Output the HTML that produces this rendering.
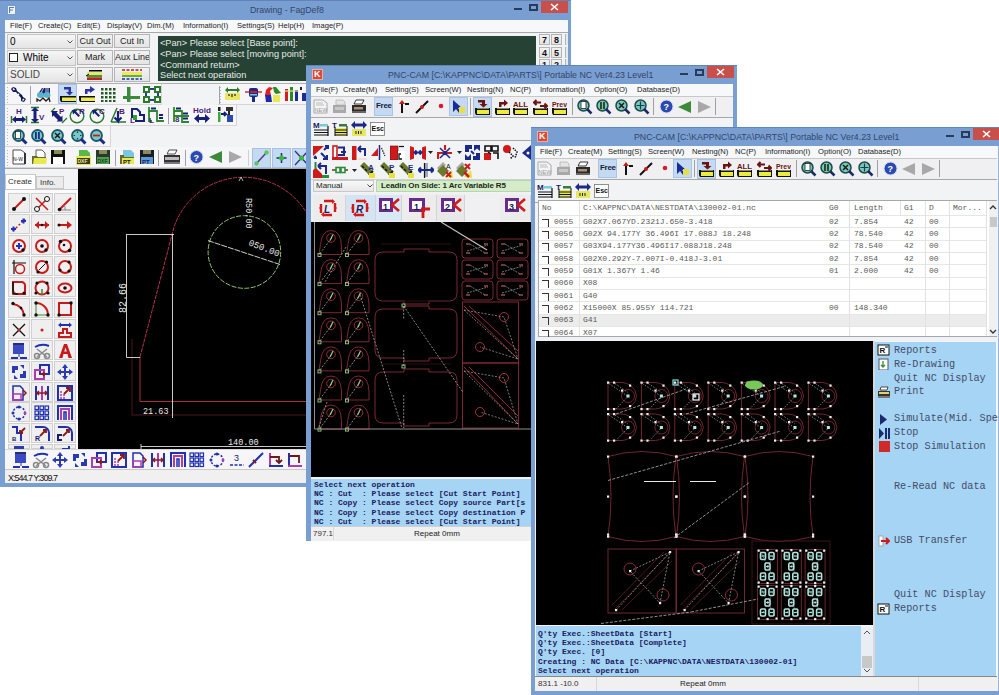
<!DOCTYPE html><html><head><meta charset="utf-8"><style>
*{margin:0;padding:0;box-sizing:border-box}
html,body{width:999px;height:695px;overflow:hidden;background:#fff;font-family:"Liberation Sans",sans-serif;font-size:9px;color:#000}
.a{position:absolute}
.t{white-space:pre;line-height:1}
.frame{background:#789ed2}
.title{color:#2a3a5a;font-size:11px;white-space:nowrap}
.menu{background:#f5f6f8}
.mi{position:absolute;font-size:7.6px;color:#222;white-space:pre;line-height:1}
.tb{background:#f2f3f5}
.blk{background:#000}
.mono{font-family:"Liberation Mono",monospace}
.msg{background:#a6d4f4;color:#1a2060;font-weight:bold;font-family:"Liberation Mono",monospace;font-size:8px;line-height:9.2px;white-space:pre;overflow:hidden}
.status{background:#f0f0f0;font-size:8px}
.cls{background:#c9504a}
.btn{background:linear-gradient(#f2f2f2,#e4e4e4);border:1px solid #b4b4b4;font-size:9px;text-align:center;color:#222;line-height:13px;white-space:nowrap;overflow:hidden}
.combo{background:linear-gradient(#f4f4f4,#e2e2e2);border:1px solid #c0c0c0;font-size:10px;color:#222;line-height:13px;white-space:nowrap}
.hl{background:#c6dcf4;border:1px solid #98b8e0}
</style></head><body>
<div class="a" style="left:0px;top:0px;width:571px;height:487px;background:#789ed2;border-top:1px solid #5f86bb"></div>
<div class="a" style="left:7px;top:5px;width:9px;height:10px;background:#eef4fc;border:1px solid #7a9aca"></div>
<svg class="a" style="left:9px;top:7px;" width="5" height="6" viewBox="0 0 5 6"><path d="M0.5 6V0.5H5M0.5 3H4" stroke="#5a7ab0" stroke-width="1.2" fill="none"/></svg>
<div class="a t" style="left:250px;top:6px;font-size:8.8px;color:#34466a">Drawing - FagDef8</div>
<div class="a" style="left:514px;top:8px;width:8px;height:2px;background:#2a3a5a"></div>
<div class="a" style="left:529px;top:4px;width:9px;height:7px;border:2px solid #2a3a5a"></div>
<div class="a" style="left:541px;top:1px;width:27px;height:12px;background:#c9504a"></div>
<svg class="a" style="left:550px;top:3px;" width="9" height="8" viewBox="0 0 9 8"><path d="M1 1L8 7M8 1L1 7" stroke="#fff" stroke-width="1.6"/></svg>
<div class="a" style="left:5px;top:20px;width:563px;height:463px;background:#f2f3f5"></div>
<div class="a" style="left:5px;top:20px;width:563px;height:12px;background:#f7f8fa"></div>
<div class="a" style="left:5px;top:32px;width:563px;height:1px;background:#a8a8a8"></div>
<div class="mi" style="left:10px;top:22px">File(F)</div>
<div class="mi" style="left:38px;top:22px">Create(C)</div>
<div class="mi" style="left:77px;top:22px">Edit(E)</div>
<div class="mi" style="left:107px;top:22px">Display(V)</div>
<div class="mi" style="left:147px;top:22px">Dim.(M)</div>
<div class="mi" style="left:183px;top:22px">Information(I)</div>
<div class="mi" style="left:237px;top:22px">Settings(S)</div>
<div class="mi" style="left:278px;top:22px">Help(H)</div>
<div class="mi" style="left:312px;top:22px">Image(P)</div>
<div class="a" style="left:7px;top:34px;width:69px;height:15px;background:linear-gradient(#f6f6f6,#e4e4e4);border:1px solid #c4c4c4"></div>
<div class="a t" style="left:10px;top:37px;font-size:10px">0</div>
<div class="a" style="left:7px;top:50px;width:69px;height:16px;background:linear-gradient(#f6f6f6,#e4e4e4);border:1px solid #c4c4c4"></div>
<div class="a" style="left:9px;top:53px;width:9px;height:9px;background:#fff;border:1px solid #222"></div>
<div class="a t" style="left:23px;top:53px;font-size:10px">White</div>
<div class="a" style="left:7px;top:67px;width:69px;height:16px;background:linear-gradient(#f6f6f6,#e4e4e4);border:1px solid #c4c4c4"></div>
<div class="a t" style="left:10px;top:70px;font-size:10px;color:#444">SOLID</div>
<svg class="a" style="left:67px;top:40px;" width="6" height="4" viewBox="0 0 6 4"><path d="M0.5 0.5L3 3L5.5 0.5" stroke="#555" fill="none"/></svg>
<svg class="a" style="left:67px;top:56px;" width="6" height="4" viewBox="0 0 6 4"><path d="M0.5 0.5L3 3L5.5 0.5" stroke="#555" fill="none"/></svg>
<svg class="a" style="left:67px;top:73px;" width="6" height="4" viewBox="0 0 6 4"><path d="M0.5 0.5L3 3L5.5 0.5" stroke="#555" fill="none"/></svg>
<div class="a btn" style="left:77px;top:34px;width:36px;height:14px">Cut Out</div>
<div class="a btn" style="left:114px;top:34px;width:36px;height:14px">Cut In</div>
<div class="a btn" style="left:77px;top:50px;width:36px;height:15px">Mark</div>
<div class="a btn" style="left:114px;top:50px;width:36px;height:15px">Aux Line</div>
<div class="a btn" style="left:77px;top:67px;width:36px;height:15px"></div>
<div class="a btn" style="left:114px;top:67px;width:36px;height:15px"></div>
<svg class="a" style="left:85px;top:68px;" width="22" height="13" viewBox="0 0 22 13"><rect x="4" y="2" width="13" height="1.5" fill="#000"/><rect x="2" y="4" width="15" height="3" fill="#e8e870"/><rect x="2" y="7" width="15" height="2.5" fill="#3a9a3a"/><rect x="2" y="9.5" width="15" height="2.5" fill="#c02020"/><path d="M1 8L4 6" stroke="#000"/></svg>
<svg class="a" style="left:120px;top:68px;" width="24" height="13" viewBox="0 0 24 13"><path d="M2 2H22" stroke="#b02020" stroke-width="1.6" stroke-dasharray="3 1.5"/><rect x="2" y="4" width="20" height="3" fill="#f0e860"/><rect x="2" y="7" width="20" height="2" fill="#60b040"/><path d="M2 11H22" stroke="#2030a0" stroke-width="1.6" stroke-dasharray="3 1.5"/></svg>
<div class="a" style="left:158px;top:36px;width:378px;height:45px;background:#264234"></div>
<div class="a" style="left:160px;top:38px;font-size:9.2px;line-height:10.8px;color:#e4ece8;white-space:pre">&lt;Pan&gt; Please select [Base point]:
&lt;Pan&gt; Please select [moving point]:
&lt;Command return&gt;
Select next operation</div>
<div class="a btn" style="left:539px;top:34.0px;width:11px;height:11px;font-size:9px;line-height:10px;font-weight:bold;color:#111">7</div>
<div class="a btn" style="left:551px;top:34.0px;width:11px;height:11px;font-size:9px;line-height:10px;font-weight:bold;color:#111">8</div>
<div class="a" style="left:565px;top:34px;width:3px;height:11px;background:#e8e8e8;border-left:1px solid #b4b4b4"></div>
<div class="a btn" style="left:539px;top:46.7px;width:11px;height:11px;font-size:9px;line-height:10px;font-weight:bold;color:#111">4</div>
<div class="a btn" style="left:551px;top:46.7px;width:11px;height:11px;font-size:9px;line-height:10px;font-weight:bold;color:#111">5</div>
<div class="a" style="left:565px;top:47px;width:3px;height:11px;background:#e8e8e8;border-left:1px solid #b4b4b4"></div>
<div class="a btn" style="left:539px;top:59.4px;width:11px;height:11px;font-size:9px;line-height:10px;font-weight:bold;color:#111">1</div>
<div class="a btn" style="left:551px;top:59.4px;width:11px;height:11px;font-size:9px;line-height:10px;font-weight:bold;color:#111">2</div>
<div class="a" style="left:565px;top:59px;width:3px;height:11px;background:#e8e8e8;border-left:1px solid #b4b4b4"></div>
<div class="a" style="left:5px;top:83px;width:563px;height:86px;background:#f2f3f5"></div>
<div class="a" style="left:5px;top:83px;width:563px;height:1px;background:#b0b0b0"></div>
<div class="a" style="left:5px;top:84px;width:157px;height:21px;background:#f6f5f8;border-bottom:1px solid #d6d6d6;border-right:1px solid #d6d6d6"></div>
<div class="a" style="left:7px;top:87px;width:1px;height:1px;background:#b8b8b8"></div>
<div class="a" style="left:7px;top:90px;width:1px;height:1px;background:#b8b8b8"></div>
<div class="a" style="left:7px;top:93px;width:1px;height:1px;background:#b8b8b8"></div>
<div class="a" style="left:7px;top:96px;width:1px;height:1px;background:#b8b8b8"></div>
<div class="a" style="left:7px;top:99px;width:1px;height:1px;background:#b8b8b8"></div>
<div class="a" style="left:7px;top:102px;width:1px;height:1px;background:#b8b8b8"></div>
<div class="a" style="left:218px;top:84px;width:90px;height:21px;background:#f6f5f8;border-bottom:1px solid #d6d6d6;border-right:1px solid #d6d6d6"></div>
<div class="a" style="left:220px;top:87px;width:1px;height:1px;background:#b8b8b8"></div>
<div class="a" style="left:220px;top:90px;width:1px;height:1px;background:#b8b8b8"></div>
<div class="a" style="left:220px;top:93px;width:1px;height:1px;background:#b8b8b8"></div>
<div class="a" style="left:220px;top:96px;width:1px;height:1px;background:#b8b8b8"></div>
<div class="a" style="left:220px;top:99px;width:1px;height:1px;background:#b8b8b8"></div>
<div class="a" style="left:220px;top:102px;width:1px;height:1px;background:#b8b8b8"></div>
<div class="a" style="left:5px;top:105px;width:232px;height:21px;background:#f6f5f8;border-bottom:1px solid #d6d6d6;border-right:1px solid #d6d6d6"></div>
<div class="a" style="left:7px;top:108px;width:1px;height:1px;background:#b8b8b8"></div>
<div class="a" style="left:7px;top:111px;width:1px;height:1px;background:#b8b8b8"></div>
<div class="a" style="left:7px;top:114px;width:1px;height:1px;background:#b8b8b8"></div>
<div class="a" style="left:7px;top:117px;width:1px;height:1px;background:#b8b8b8"></div>
<div class="a" style="left:7px;top:120px;width:1px;height:1px;background:#b8b8b8"></div>
<div class="a" style="left:7px;top:123px;width:1px;height:1px;background:#b8b8b8"></div>
<div class="a" style="left:5px;top:126px;width:106px;height:21px;background:#f6f5f8;border-bottom:1px solid #d6d6d6;border-right:1px solid #d6d6d6"></div>
<div class="a" style="left:7px;top:129px;width:1px;height:1px;background:#b8b8b8"></div>
<div class="a" style="left:7px;top:132px;width:1px;height:1px;background:#b8b8b8"></div>
<div class="a" style="left:7px;top:135px;width:1px;height:1px;background:#b8b8b8"></div>
<div class="a" style="left:7px;top:138px;width:1px;height:1px;background:#b8b8b8"></div>
<div class="a" style="left:7px;top:141px;width:1px;height:1px;background:#b8b8b8"></div>
<div class="a" style="left:7px;top:144px;width:1px;height:1px;background:#b8b8b8"></div>
<div class="a" style="left:5px;top:147px;width:302px;height:21px;background:#f6f5f8;border-bottom:1px solid #d6d6d6;border-right:1px solid #d6d6d6"></div>
<div class="a" style="left:7px;top:150px;width:1px;height:1px;background:#b8b8b8"></div>
<div class="a" style="left:7px;top:153px;width:1px;height:1px;background:#b8b8b8"></div>
<div class="a" style="left:7px;top:156px;width:1px;height:1px;background:#b8b8b8"></div>
<div class="a" style="left:7px;top:159px;width:1px;height:1px;background:#b8b8b8"></div>
<div class="a" style="left:7px;top:162px;width:1px;height:1px;background:#b8b8b8"></div>
<div class="a" style="left:7px;top:165px;width:1px;height:1px;background:#b8b8b8"></div>
<div class="a" style="left:5px;top:168px;width:563px;height:1px;background:#a8a8a8"></div>
<svg class="a" style="left:10px;top:86px;" width="17" height="17" viewBox="0 0 17 17"><path d="M3 1L1 3L3 6L6 6L11 12L11 15L14 16L16 13L13 11L12 9L7 5L6 2Z" fill="#16165a"/><path d="M14 13L12.5 14.5" stroke="#f4f4f8" stroke-width="1.5"/><path d="M3 2.5L4.5 4" stroke="#f4f4f8" stroke-width="1.5"/><circle cx="8.5" cy="8.5" r="0.9" fill="#fff"/></svg>
<div class="a" style="left:30px;top:86px;width:1px;height:18px;background:#a0a0a8"></div>
<svg class="a" style="left:36px;top:86px;" width="15" height="17" viewBox="0 0 15 17"><path d="M2 8L6 2H14V9H2Z" fill="#16206a"/><path d="M8 1L5 7M10 2V8M12 2V8" stroke="#f4f4f8" stroke-width=".8"/><ellipse cx="4.5" cy="9" rx="3.5" ry="3" fill="#58b4cc"/><ellipse cx="11" cy="9" rx="3.5" ry="3" fill="#58b4cc"/><path d="M1 16V13L4 15L7 12L10 15L13 12L14 16" stroke="#301818" fill="none" stroke-width="1.3"/></svg>
<div class="a" style="left:58px;top:84px;width:19px;height:20px;background:#c4daf2;border:1px solid #a4c0e4"></div>
<svg class="a" style="left:60px;top:86px;" width="17" height="17" viewBox="0 0 17 17"><path d="M4 1H11V6H13L9.5 9.5L6 6H8.5V3.5H4Z" fill="#2a36a8"/><path d="M0 10H16V16H1L0 14Z" fill="#101010"/><rect x="2" y="11.5" width="14" height="3.5" fill="#ecec4a"/></svg>
<svg class="a" style="left:79px;top:86px;" width="17" height="17" viewBox="0 0 17 17"><path d="M6 8V3H11V0L16 3.5L11 7V5.5H8.5V8Z" fill="#2a36a8"/><path d="M0 10H16V16H1L0 14Z" fill="#101010"/><rect x="2" y="11.5" width="14" height="3.5" fill="#ecec4a"/></svg>
<svg class="a" style="left:100px;top:87px;" width="16" height="15" viewBox="0 0 16 15"><rect x="1" y="1" width="2.5" height="2.5" fill="#245a24"/><rect x="5" y="1" width="2.5" height="2.5" fill="#245a24"/><rect x="9" y="1" width="2.5" height="2.5" fill="#245a24"/><rect x="13" y="1" width="2.5" height="2.5" fill="#245a24"/><rect x="1" y="5" width="2.5" height="2.5" fill="#245a24"/><rect x="5" y="5" width="2.5" height="2.5" fill="#245a24"/><rect x="9" y="5" width="2.5" height="2.5" fill="#245a24"/><rect x="13" y="5" width="2.5" height="2.5" fill="#245a24"/><rect x="1" y="9" width="2.5" height="2.5" fill="#245a24"/><rect x="5" y="9" width="2.5" height="2.5" fill="#245a24"/><rect x="9" y="9" width="2.5" height="2.5" fill="#245a24"/><rect x="13" y="9" width="2.5" height="2.5" fill="#245a24"/><rect x="1" y="13" width="2.5" height="2.5" fill="#245a24"/><rect x="5" y="13" width="2.5" height="2.5" fill="#245a24"/><rect x="9" y="13" width="2.5" height="2.5" fill="#245a24"/><rect x="13" y="13" width="2.5" height="2.5" fill="#245a24"/></svg>
<svg class="a" style="left:123px;top:87px;" width="17" height="15" viewBox="0 0 17 15"><rect x="4" y="0" width="3.5" height="15" fill="#3a8a3a"/><rect x="0" y="9" width="17" height="3" fill="#3a8a3a"/></svg>
<svg class="a" style="left:143px;top:86px;" width="18" height="17" viewBox="0 0 18 17"><g fill="#2a3aa8"><rect x="6" y="2" width="6" height="2"/><rect x="6" y="13" width="6" height="2"/><rect x="2" y="6" width="2" height="5"/><rect x="14" y="6" width="2" height="5"/></g><g fill="none" stroke="#2a7a2a" stroke-width="2"><rect x="1" y="1" width="5" height="5"/><rect x="12" y="1" width="5" height="5"/><rect x="1" y="11" width="5" height="5"/><rect x="12" y="11" width="5" height="5"/></g></svg>
<div class="a" style="left:219px;top:86px;width:1px;height:18px;background:#a0a0a8"></div>
<svg class="a" style="left:224px;top:87px;" width="17" height="14" viewBox="0 0 17 14"><path d="M1 3L4 0V2H13V0L16 3L13 6V4H4V6Z" fill="#2a7a2a"/><rect x="1" y="6" width="15" height="7" fill="#eae860"/><path d="M5 7V9M8 7V10M11 7V9" stroke="#202020" stroke-width="1.2"/></svg>
<svg class="a" style="left:245px;top:87px;" width="17" height="15" viewBox="0 0 17 15"><path d="M0 5H17" stroke="#d02020" stroke-width="1.4"/><rect x="4" y="1" width="9" height="9" rx="2" fill="#1a2a8a"/><rect x="5" y="4" width="7" height="2" fill="#d02020"/><rect x="5" y="7" width="7" height="1.5" fill="#6ad0e0"/><rect x="7" y="10" width="3" height="5" fill="#1a2a8a"/></svg>
<svg class="a" style="left:265px;top:87px;" width="16" height="15" viewBox="0 0 16 15"><path d="M1 3L4 0L8 1L5 4L6 8H0Z" fill="#e02020"/><path d="M8 0H11L16 6L11 7L9 5Z" fill="#2a8a2a"/><path d="M0 8H6L7 15H1Z" fill="#1a2ab0"/><rect x="8" y="8" width="7" height="7" fill="#e8e850"/></svg>
<svg class="a" style="left:285px;top:86px;" width="22" height="16" viewBox="0 0 22 16"><rect x="0" y="3" width="3" height="12" fill="#d02020"/><rect x="5" y="1" width="3" height="14" fill="#2a8a2a"/><rect x="10" y="4" width="3" height="11" fill="#1a2aa0"/><rect x="15" y="1" width="2" height="3" fill="#222"/><rect x="17" y="7" width="4" height="8" fill="#1a2aa0"/><rect x="0" y="4" width="13" height="2" fill="#e8e880" opacity=".6"/></svg>
<svg class="a" style="left:10px;top:107px;" width="18" height="17" viewBox="0 0 18 17"><text font-family="Liberation Sans" font-weight="bold" font-size="8" fill="#4a1a7a" x="6" y="7">H</text><path d="M1.5 9V16M16.5 9V16" stroke="#2a7a2a" stroke-width="1.5"/><path d="M2 12.5L6 9V11H12V9L16 12.5L12 16V14H6V16Z" fill="#16207a"/></svg>
<svg class="a" style="left:30px;top:106px;" width="18" height="18" viewBox="0 0 18 18"><path d="M1 1.5H9M1 16.5H9" stroke="#2a7a2a" stroke-width="1.5"/><path d="M5 1L9 5H6.5V13H9L5 17L1 13H3.5V5H1Z" fill="#16207a"/><text font-family="Liberation Sans" font-weight="bold" font-size="8" fill="#4a1a7a" x="9" y="14" font-size="9">V</text></svg>
<svg class="a" style="left:50px;top:106px;" width="18" height="18" viewBox="0 0 18 18"><path d="M1 6L5 2M12 17L17 12" stroke="#2a7a2a" stroke-width="1.3"/><path d="M2 5H8L6.5 6.5L11 11L12.5 9.5V15.5H6.5L8 14L3.5 9.5L2 11Z" fill="#16207a"/><text font-family="Liberation Sans" font-weight="bold" font-size="8" fill="#4a1a7a" x="9" y="8" font-size="9">P</text></svg>
<svg class="a" style="left:69px;top:106px;" width="18" height="18" viewBox="0 0 18 18"><circle cx="8" cy="10" r="6.8" fill="none" stroke="#2a7a2a" stroke-width="1.4"/><path d="M3 4H8.5L7 5.5L11 9.5L9.5 11L5.5 7L4 8.5Z" fill="#16207a"/><text font-family="Liberation Sans" font-weight="bold" font-size="8" fill="#4a1a7a" x="10" y="8" font-size="9">R</text></svg>
<svg class="a" style="left:89px;top:106px;" width="18" height="18" viewBox="0 0 18 18"><circle cx="8" cy="10" r="6.8" fill="none" stroke="#2a7a2a" stroke-width="1.4"/><path d="M3 4H8.5L7 5.5L11 9.5L9.5 11L5.5 7L4 8.5Z" fill="#16207a"/><text font-family="Liberation Sans" font-weight="bold" font-size="8" fill="#4a1a7a" x="10" y="8" font-size="9">C</text></svg>
<svg class="a" style="left:110px;top:106px;" width="17" height="18" viewBox="0 0 17 18"><path d="M1 16L7 2M1 16H16" stroke="#2a7a2a" stroke-width="1.5"/><path d="M8 5V15L4.5 11.5M8 15L11.5 11.5" stroke="#16207a" stroke-width="2.2" fill="none"/><text font-family="Liberation Sans" font-weight="bold" font-size="8" fill="#4a1a7a" x="9" y="8" font-size="9">B</text></svg>
<svg class="a" style="left:129px;top:106px;" width="17" height="18" viewBox="0 0 17 18"><path d="M3 3H8L11 6V9H15V15H7V11H3Z" fill="none" stroke="#16207a" stroke-width="2"/><rect x="4" y="9" width="4" height="5" fill="#3a9a3a"/><text font-family="Liberation Sans" font-weight="bold" font-size="8" fill="#4a1a7a" x="1" y="17">L</text></svg>
<svg class="a" style="left:148px;top:106px;" width="17" height="18" viewBox="0 0 17 18"><path d="M1 1V15H4M1 5H9V15H16" stroke="#2a8a2a" stroke-width="1.8" fill="none"/><path d="M3 2.5H8M11 9H15M11 12H15" stroke="#16207a" stroke-width="1.8"/><text font-family="Liberation Sans" font-weight="bold" font-size="8" fill="#4a1a7a" x="1" y="17">L</text></svg>
<div class="a" style="left:168px;top:108px;width:1px;height:16px;background:#a0a0a8"></div>
<svg class="a" style="left:173px;top:106px;" width="17" height="18" viewBox="0 0 17 18"><path d="M1 1V16M1 5H9V16H16M1 10H16" stroke="#2a8a2a" stroke-width="1.8" fill="none"/><path d="M3 2.5H8M10 7.5H15M10 12.5H15" stroke="#16207a" stroke-width="1.8"/><text font-family="Liberation Sans" font-weight="bold" font-size="8" fill="#4a1a7a" x="2" y="16">8</text></svg>
<svg class="a" style="left:193px;top:106px;" width="18" height="18" viewBox="0 0 18 18"><text font-family="Liberation Sans" font-weight="bold" font-size="8" fill="#4a1a7a" x="0" y="7" font-size="7" fill="#3a1a7a">Hold</text><path d="M1 12.5L6 8V11H12V8L17 12.5L12 17V14H6V17Z" fill="#16207a"/></svg>
<svg class="a" style="left:217px;top:106px;" width="17" height="18" viewBox="0 0 17 18"><rect x="1" y="6" width="2.5" height="10" fill="#3aaa3a"/><rect x="1" y="1" width="2.5" height="4" fill="#222"/><path d="M4 8H9L7 6M9 8L7 10" stroke="#16207a" stroke-width="1.8" fill="none"/><rect x="9" y="1" width="7" height="4" fill="#333"/><rect x="10" y="9" width="6" height="7" fill="#2a4ab0"/><rect x="11" y="5" width="2" height="4" fill="#222"/></svg>
<svg class="a" style="left:12px;top:129px;" width="16" height="16" viewBox="0 0 16 16"><circle cx="6.5" cy="6.5" r="5.5" fill="#7ac8c8" stroke="#1a5a6a" stroke-width="1.8"/><rect x="3.5" y="2.5" width="5" height="7" fill="#fff" stroke="#222" stroke-width=".8"/><path d="M10 10L14.5 14.5" stroke="#1a2a8a" stroke-width="3"/></svg>
<svg class="a" style="left:31px;top:129px;" width="16" height="16" viewBox="0 0 16 16"><circle cx="6.5" cy="6.5" r="5.5" fill="#7ac8c8" stroke="#1a5a6a" stroke-width="1.8"/><rect x="4" y="3" width="1.8" height="7" fill="#1a2a8a"/><rect x="7" y="3" width="1.8" height="7" fill="#1a2a8a"/><path d="M10 10L14.5 14.5" stroke="#1a2a8a" stroke-width="3"/></svg>
<svg class="a" style="left:51px;top:129px;" width="16" height="16" viewBox="0 0 16 16"><circle cx="6.5" cy="6.5" r="5.5" fill="#7ac8c8" stroke="#1a5a6a" stroke-width="1.8"/><path d="M4 4L9 9M9 4L4 9" stroke="#1a1a1a" stroke-width="1.5"/><path d="M10 10L14.5 14.5" stroke="#1a2a8a" stroke-width="3"/></svg>
<svg class="a" style="left:71px;top:129px;" width="16" height="16" viewBox="0 0 16 16"><circle cx="6.5" cy="6.5" r="5.5" fill="#7ac8c8" stroke="#1a5a6a" stroke-width="1.8"/><path d="M6.5 2.5V4M6.5 9V10.5M2.5 6.5H4M9 6.5H10.5" stroke="#1a3a5a" stroke-width="1.2"/><path d="M10 10L14.5 14.5" stroke="#1a2a8a" stroke-width="3"/></svg>
<svg class="a" style="left:90px;top:129px;" width="16" height="16" viewBox="0 0 16 16"><circle cx="6.5" cy="6.5" r="5.5" fill="#7ac8c8" stroke="#1a5a6a" stroke-width="1.8"/><path d="M3 6.5H10" stroke="#c02020" stroke-width="1.8"/><path d="M10 10L14.5 14.5" stroke="#1a2a8a" stroke-width="3"/></svg>
<svg class="a" style="left:12px;top:149px;" width="15" height="16" viewBox="0 0 15 16"><path d="M1 1H9L13 4V15H1Z" fill="#fff" stroke="#222" stroke-width=".8"/><path d="M13 4V15" stroke="#111" stroke-width="1.5"/><text x="1" y="12" font-size="5" font-family="Liberation Sans" fill="#111">N-W</text></svg>
<svg class="a" style="left:31px;top:149px;" width="16" height="16" viewBox="0 0 16 16"><path d="M5 1H11L14 4V9H5Z" fill="#fff" stroke="#333" stroke-width=".8"/><path d="M1 7H6L7 8H15V15H1Z" fill="#6a6a2a"/><path d="M3 9H16L15 15H2Z" fill="#e8e850"/></svg>
<svg class="a" style="left:50px;top:149px;" width="16" height="16" viewBox="0 0 16 16"><rect x="1" y="1" width="14" height="14" fill="#101010"/><rect x="4" y="1" width="8" height="4" fill="#8a8a5a"/><rect x="3" y="8" width="10" height="7" fill="#fff"/></svg>
<svg class="a" style="left:75px;top:149px;" width="16" height="16" viewBox="0 0 16 16"><path d="M4 1H12L15 4V9H4Z" fill="#5ab84a"/><rect x="1" y="7" width="15" height="9" fill="#e8e850"/><rect x="2" y="9" width="13" height="6" fill="#3a3a1a"/><text x="2.5" y="14" font-size="5" font-weight="bold" font-family="Liberation Sans" fill="#e8e8a0">DXF</text></svg>
<svg class="a" style="left:95px;top:149px;" width="16" height="16" viewBox="0 0 16 16"><rect x="1" y="1" width="14" height="14" fill="#2a3a2a"/><rect x="4" y="1" width="8" height="4" fill="#8a8a5a"/><rect x="2" y="8" width="12" height="7" fill="#4aa04a"/><text x="2.5" y="14" font-size="5" font-family="Liberation Sans" fill="#111">DXF</text></svg>
<div class="a" style="left:115px;top:150px;width:1px;height:16px;background:#a0a0a8"></div>
<svg class="a" style="left:119px;top:149px;" width="16" height="16" viewBox="0 0 16 16"><path d="M4 1H12L15 4V9H4Z" fill="#7ac8e0"/><path d="M1 6H5V8H15V15H1Z" fill="#6a6a2a"/><rect x="3" y="9" width="12" height="6" fill="#e8e850"/><text x="4" y="14.5" font-size="6" font-weight="bold" font-family="Liberation Sans" fill="#111">PT</text></svg>
<svg class="a" style="left:139px;top:149px;" width="16" height="16" viewBox="0 0 16 16"><rect x="1" y="1" width="14" height="14" fill="#1a1a2a"/><rect x="4" y="1" width="8" height="4" fill="#8a8a5a"/><rect x="2" y="8" width="12" height="7" fill="#5a9ad0"/><text x="3" y="14.5" font-size="6" font-weight="bold" font-family="Liberation Sans" fill="#1a1a5a">PT</text></svg>
<div class="a" style="left:158px;top:150px;width:1px;height:16px;background:#a0a0a8"></div>
<svg class="a" style="left:163px;top:149px;" width="18" height="16" viewBox="0 0 18 16"><path d="M6 1H14L12 5H4Z" fill="#fff" stroke="#222" stroke-width=".8"/><path d="M1 6H17V13H1Z" fill="#333"/><rect x="2" y="8" width="14" height="3" fill="#bcbcbc"/><rect x="1" y="13" width="16" height="2" fill="#777"/></svg>
<div class="a" style="left:185px;top:150px;width:1px;height:16px;background:#a0a0a8"></div>
<svg class="a" style="left:189px;top:149px;" width="15" height="16" viewBox="0 0 15 16"><circle cx="7.5" cy="8" r="6.5" fill="#2a4ab0" stroke="#cfd8f0"/><text x="4.5" y="11.5" font-size="9" font-weight="bold" font-family="Liberation Sans" fill="#fff">?</text></svg>
<svg class="a" style="left:208px;top:150px;" width="15" height="14" viewBox="0 0 15 14"><path d="M1 7L14 1V13Z" fill="#3a8a3a"/></svg>
<svg class="a" style="left:228px;top:150px;" width="15" height="14" viewBox="0 0 15 14"><path d="M14 7L1 1V13Z" fill="#a8a8a8"/></svg>
<div class="a" style="left:248px;top:150px;width:1px;height:16px;background:#d0d0d0"></div>
<div class="a" style="left:252px;top:148px;width:19px;height:20px;background:#c4daf2;border:1px solid #a4c0e4"></div>
<div class="a" style="left:272px;top:148px;width:19px;height:20px;background:#c4daf2;border:1px solid #a4c0e4"></div>
<div class="a" style="left:292px;top:148px;width:19px;height:20px;background:#c4daf2;border:1px solid #a4c0e4"></div>
<svg class="a" style="left:254px;top:150px;" width="15" height="16" viewBox="0 0 15 16"><path d="M2 14L13 2" stroke="#5a3a8a" stroke-width="1.5"/><circle cx="2.5" cy="13.5" r="2.2" fill="#5ac85a"/><circle cx="12.5" cy="2.5" r="2.2" fill="#5ac85a"/></svg>
<svg class="a" style="left:274px;top:150px;" width="15" height="16" viewBox="0 0 15 16"><path d="M7.5 3V13M2.5 8H12.5" stroke="#1a2a7a" stroke-width="1.5"/><circle cx="7.5" cy="8" r="2.5" fill="#3ab83a"/></svg>
<svg class="a" style="left:294px;top:150px;" width="15" height="16" viewBox="0 0 15 16"><path d="M1 1L14 15M14 1L1 15" stroke="#3a2a8a" stroke-width="1.3"/><circle cx="7.5" cy="8" r="2.5" fill="#3ab83a"/></svg>
<div class="a" style="left:78px;top:169px;width:490px;height:280px;background:#000"></div>
<div class="a" style="left:5px;top:169px;width:73px;height:280px;background:#f2f3f5"></div>
<div class="a" style="left:5px;top:174px;width:31px;height:16px;background:#fff;border:1px solid #c8c8c8;border-bottom:none"></div>
<div class="a t" style="left:8px;top:178px;font-size:8px;color:#333">Create</div>
<div class="a" style="left:36px;top:176px;width:28px;height:13px;background:#ececec;border:1px solid #c8c8c8"></div>
<div class="a t" style="left:40px;top:179px;font-size:8px;color:#333">Info.</div>
<div class="a" style="left:5px;top:189px;width:73px;height:260px;background:#fbfbfb;border-top:1px solid #c8c8c8"></div>
<div class="a" style="left:8px;top:193px;width:22px;height:20px;background:#efefef;border:1px solid #d0d0d0"></div>
<svg class="a" style="left:10px;top:195px;" width="18" height="18" viewBox="0 0 18 18"><path d="M4 14L14 4" stroke="#c81a1a" stroke-width="2"/><circle cx="4" cy="14" r="2" fill="#101010"/><circle cx="14" cy="4" r="2" fill="#101010"/></svg>
<div class="a" style="left:31px;top:193px;width:22px;height:20px;background:#efefef;border:1px solid #d0d0d0"></div>
<svg class="a" style="left:33px;top:195px;" width="18" height="18" viewBox="0 0 18 18"><path d="M3 15L15 3M3 3L15 15" stroke="#c81a1a" stroke-width="1.5"/><circle cx="14" cy="4" r="2.5" fill="#fff" stroke="#101010"/><circle cx="4" cy="14" r="2.5" fill="#fff" stroke="#101010"/></svg>
<div class="a" style="left:54px;top:193px;width:22px;height:20px;background:#efefef;border:1px solid #d0d0d0"></div>
<svg class="a" style="left:56px;top:195px;" width="18" height="18" viewBox="0 0 18 18"><path d="M3 15L15 3" stroke="#c81a1a" stroke-width="2"/><path d="M9 15A6 6 0 0 0 8 10M3 15H15" stroke="#888" fill="none"/><circle cx="3.5" cy="14.5" r="1.8" fill="#101010"/></svg>
<div class="a" style="left:8px;top:214px;width:22px;height:20px;background:#efefef;border:1px solid #d0d0d0"></div>
<svg class="a" style="left:10px;top:216px;" width="18" height="18" viewBox="0 0 18 18"><path d="M3 15L15 3" stroke="#c81a1a" stroke-width="1.5" stroke-dasharray="2 2"/><path d="M1 13H6M3.5 10.5V15.5M11 5H16M13.5 2.5V7.5" stroke="#2030c0" stroke-width="2"/></svg>
<div class="a" style="left:31px;top:214px;width:22px;height:20px;background:#efefef;border:1px solid #d0d0d0"></div>
<svg class="a" style="left:33px;top:216px;" width="18" height="18" viewBox="0 0 18 18"><path d="M2 9H16" stroke="#c81a1a" stroke-width="2"/><path d="M2 9L6 5V13ZM16 9L12 5V13Z" fill="#c81a1a"/><circle cx="9" cy="9" r="1.2" fill="#101010"/></svg>
<div class="a" style="left:54px;top:214px;width:22px;height:20px;background:#efefef;border:1px solid #d0d0d0"></div>
<svg class="a" style="left:56px;top:216px;" width="18" height="18" viewBox="0 0 18 18"><path d="M2 9H14" stroke="#c81a1a" stroke-width="2"/><path d="M16 9L11 5V13Z" fill="#c81a1a"/><circle cx="3" cy="9" r="1.5" fill="#101010"/></svg>
<div class="a" style="left:8px;top:235px;width:22px;height:20px;background:#efefef;border:1px solid #d0d0d0"></div>
<svg class="a" style="left:10px;top:237px;" width="18" height="18" viewBox="0 0 18 18"><circle cx="9" cy="9" r="6" fill="none" stroke="#c81a1a" stroke-width="2"/><path d="M9 6V12M6 9H12" stroke="#2030c0" stroke-width="2"/><circle cx="13" cy="13" r="1.7" fill="#101010"/></svg>
<div class="a" style="left:31px;top:235px;width:22px;height:20px;background:#efefef;border:1px solid #d0d0d0"></div>
<svg class="a" style="left:33px;top:237px;" width="18" height="18" viewBox="0 0 18 18"><circle cx="9" cy="9" r="6" fill="none" stroke="#c81a1a" stroke-width="2"/><circle cx="9" cy="9" r="1.8" fill="#101010"/><circle cx="13" cy="13" r="1.7" fill="#101010"/></svg>
<div class="a" style="left:54px;top:235px;width:22px;height:20px;background:#efefef;border:1px solid #d0d0d0"></div>
<svg class="a" style="left:56px;top:237px;" width="18" height="18" viewBox="0 0 18 18"><circle cx="9" cy="9" r="6" fill="none" stroke="#c81a1a" stroke-width="2"/><circle cx="4.5" cy="4.5" r="1.8" fill="#101010"/><circle cx="13.5" cy="13.5" r="1.8" fill="#101010"/><circle cx="8" cy="8" r="1.3" fill="#101010"/></svg>
<div class="a" style="left:8px;top:256px;width:22px;height:20px;background:#efefef;border:1px solid #d0d0d0"></div>
<svg class="a" style="left:10px;top:258px;" width="18" height="18" viewBox="0 0 18 18"><path d="M4 2V16M2 5H16" stroke="#101010" stroke-width="1.2"/><circle cx="10" cy="11" r="4.5" fill="none" stroke="#c81a1a" stroke-width="1.5"/></svg>
<div class="a" style="left:31px;top:256px;width:22px;height:20px;background:#efefef;border:1px solid #d0d0d0"></div>
<svg class="a" style="left:33px;top:258px;" width="18" height="18" viewBox="0 0 18 18"><circle cx="9" cy="9" r="6" fill="none" stroke="#c81a1a" stroke-width="2"/><path d="M6 12L12 6" stroke="#101010"/><circle cx="5" cy="14" r="1.6" fill="#101010"/><circle cx="13.5" cy="4" r="1.6" fill="#101010"/></svg>
<div class="a" style="left:54px;top:256px;width:22px;height:20px;background:#efefef;border:1px solid #d0d0d0"></div>
<svg class="a" style="left:56px;top:258px;" width="18" height="18" viewBox="0 0 18 18"><circle cx="9" cy="9" r="6" fill="none" stroke="#c81a1a" stroke-width="2"/><circle cx="13" cy="4" r="1.6" fill="#101010"/><circle cx="4" cy="12" r="1.6" fill="#101010"/><circle cx="13" cy="13" r="1.6" fill="#101010"/></svg>
<div class="a" style="left:8px;top:277px;width:22px;height:20px;background:#efefef;border:1px solid #d0d0d0"></div>
<svg class="a" style="left:10px;top:279px;" width="18" height="18" viewBox="0 0 18 18"><path d="M3 3H12A4 4 0 0 1 15 8V15H6A4 4 0 0 1 3 11Z" fill="none" stroke="#c81a1a" stroke-width="2"/><path d="M3 3V15H8" stroke="#101010" stroke-width="1.5" fill="none"/><circle cx="14" cy="14" r="1.6" fill="#101010"/></svg>
<div class="a" style="left:31px;top:277px;width:22px;height:20px;background:#efefef;border:1px solid #d0d0d0"></div>
<svg class="a" style="left:33px;top:279px;" width="18" height="18" viewBox="0 0 18 18"><circle cx="9" cy="9" r="6.5" fill="none" stroke="#c81a1a" stroke-width="2"/><path d="M9 10V16" stroke="#3a8a3a" stroke-width="1.5"/><circle cx="4" cy="4" r="1.6" fill="#101010"/><circle cx="14" cy="4" r="1.6" fill="#101010"/><circle cx="3" cy="14" r="1.6" fill="#101010"/><circle cx="15" cy="14" r="1.6" fill="#101010"/></svg>
<div class="a" style="left:54px;top:277px;width:22px;height:20px;background:#efefef;border:1px solid #d0d0d0"></div>
<svg class="a" style="left:56px;top:279px;" width="18" height="18" viewBox="0 0 18 18"><ellipse cx="9" cy="9" rx="6.5" ry="4.5" fill="none" stroke="#c81a1a" stroke-width="2"/><circle cx="9" cy="9" r="1.8" fill="#101010"/></svg>
<div class="a" style="left:8px;top:298px;width:22px;height:20px;background:#efefef;border:1px solid #d0d0d0"></div>
<svg class="a" style="left:10px;top:300px;" width="18" height="18" viewBox="0 0 18 18"><path d="M3 4A12 12 0 0 1 14 15" fill="none" stroke="#c81a1a" stroke-width="2"/><circle cx="3" cy="3.5" r="1.7" fill="#101010"/><circle cx="14" cy="15" r="1.7" fill="#101010"/><circle cx="11" cy="8" r="1.3" fill="#101010"/></svg>
<div class="a" style="left:31px;top:298px;width:22px;height:20px;background:#efefef;border:1px solid #d0d0d0"></div>
<svg class="a" style="left:33px;top:300px;" width="18" height="18" viewBox="0 0 18 18"><path d="M3 3A12 12 0 0 1 15 15" fill="none" stroke="#c81a1a" stroke-width="2"/><path d="M3 3V15H15" stroke="#3a8a3a" fill="none"/><circle cx="3" cy="3" r="1.7" fill="#101010"/><circle cx="15" cy="15" r="1.7" fill="#101010"/><circle cx="3" cy="15" r="1.7" fill="#101010"/></svg>
<div class="a" style="left:54px;top:298px;width:22px;height:20px;background:#efefef;border:1px solid #d0d0d0"></div>
<svg class="a" style="left:56px;top:300px;" width="18" height="18" viewBox="0 0 18 18"><rect x="3" y="3" width="12" height="12" fill="none" stroke="#c81a1a" stroke-width="2"/><circle cx="3" cy="15" r="1.7" fill="#101010"/><circle cx="15" cy="3" r="1.7" fill="#101010"/></svg>
<div class="a" style="left:8px;top:319px;width:22px;height:20px;background:#efefef;border:1px solid #d0d0d0"></div>
<svg class="a" style="left:10px;top:321px;" width="18" height="18" viewBox="0 0 18 18"><path d="M3 3L15 15M15 3L3 15" stroke="#101010" stroke-width="1.3"/><circle cx="9" cy="9" r="1.5" fill="#c81a1a"/></svg>
<div class="a" style="left:31px;top:319px;width:22px;height:20px;background:#efefef;border:1px solid #d0d0d0"></div>
<svg class="a" style="left:33px;top:321px;" width="18" height="18" viewBox="0 0 18 18"><circle cx="9" cy="9" r="1.5" fill="#c81a1a"/></svg>
<div class="a" style="left:54px;top:319px;width:22px;height:20px;background:#efefef;border:1px solid #d0d0d0"></div>
<svg class="a" style="left:56px;top:321px;" width="18" height="18" viewBox="0 0 18 18"><path d="M2 4L5 1.5V3H13V1.5L16 4L13 6.5V5H5V6.5Z" fill="#2030b0"/><path d="M3 16V12H7V8H11V12H15V16Z" fill="none" stroke="#c81a1a" stroke-width="2"/></svg>
<div class="a" style="left:8px;top:340px;width:22px;height:20px;background:#efefef;border:1px solid #d0d0d0"></div>
<svg class="a" style="left:10px;top:342px;" width="18" height="18" viewBox="0 0 18 18"><rect x="3" y="1" width="11" height="11" fill="#3a4ac0"/><rect x="3" y="1" width="11" height="2" fill="#2a2a7a"/><path d="M1 16H8M10 16H17" stroke="#2030b0" stroke-width="2"/><path d="M9 12V15" stroke="#2030b0"/></svg>
<div class="a" style="left:31px;top:340px;width:22px;height:20px;background:#efefef;border:1px solid #d0d0d0"></div>
<svg class="a" style="left:33px;top:342px;" width="18" height="18" viewBox="0 0 18 18"><path d="M2 5Q9 1 16 4" stroke="#2030b0" stroke-width="2" fill="none"/><path d="M4 15L14 7M14 15L4 7" stroke="#888" stroke-width="1.5"/><circle cx="4" cy="14" r="2.5" fill="none" stroke="#888" stroke-width="1.5"/><circle cx="14" cy="14" r="2.5" fill="none" stroke="#888" stroke-width="1.5"/></svg>
<div class="a" style="left:54px;top:340px;width:22px;height:20px;background:#efefef;border:1px solid #d0d0d0"></div>
<svg class="a" style="left:56px;top:342px;" width="18" height="18" viewBox="0 0 18 18"><path d="M3 16L8 2H11L16 16H12.5L11.5 12H7.5L6.5 16ZM8.2 9.5H10.8L9.5 5.5Z" fill="#c81a1a"/></svg>
<div class="a" style="left:8px;top:361px;width:22px;height:20px;background:#efefef;border:1px solid #d0d0d0"></div>
<svg class="a" style="left:10px;top:363px;" width="18" height="18" viewBox="0 0 18 18"><path d="M2 3H8V7H5V10H2ZM16 15H10V11H13V8H16Z" fill="#2a3ab0"/><path d="M10 2L14 2L14 6ZM8 16L4 16L4 12Z" fill="#2a3ab0"/></svg>
<div class="a" style="left:31px;top:361px;width:22px;height:20px;background:#efefef;border:1px solid #d0d0d0"></div>
<svg class="a" style="left:33px;top:363px;" width="18" height="18" viewBox="0 0 18 18"><rect x="7" y="2" width="9" height="9" fill="none" stroke="#2030b0" stroke-width="2"/><rect x="2" y="7" width="9" height="9" fill="none" stroke="#b03ab0" stroke-width="2"/><path d="M6 11H12M10 9L12 11L10 13" stroke="#8a1a1a" stroke-width="1.5" fill="none"/></svg>
<div class="a" style="left:54px;top:361px;width:22px;height:20px;background:#efefef;border:1px solid #d0d0d0"></div>
<svg class="a" style="left:56px;top:363px;" width="18" height="18" viewBox="0 0 18 18"><path d="M9 1L12 5H10V8H13V6L17 9L13 12V10H10V13H12L9 17L6 13H8V10H5V12L1 9L5 6V8H8V5H6Z" fill="#2a3ab0"/></svg>
<div class="a" style="left:8px;top:382px;width:22px;height:20px;background:#efefef;border:1px solid #d0d0d0"></div>
<svg class="a" style="left:10px;top:384px;" width="18" height="18" viewBox="0 0 18 18"><path d="M3 2H10L13 5V16H3Z" fill="none" stroke="#2030b0" stroke-width="1.5"/><rect x="3" y="10" width="8" height="6" fill="none" stroke="#b03ab0" stroke-width="1.5"/><path d="M13 6L16 9L13 12" stroke="#8a1a1a" stroke-width="1.5" fill="none"/></svg>
<div class="a" style="left:31px;top:382px;width:22px;height:20px;background:#efefef;border:1px solid #d0d0d0"></div>
<svg class="a" style="left:33px;top:384px;" width="18" height="18" viewBox="0 0 18 18"><path d="M3 2V16M15 2V16" stroke="#2030b0" stroke-width="2"/><path d="M9 2V16" stroke="#b03ab0" stroke-width="2"/><path d="M4 9H14M6 7L4 9L6 11M12 7L14 9L12 11" stroke="#8a1a1a" stroke-width="1.5" fill="none"/></svg>
<div class="a" style="left:54px;top:382px;width:22px;height:20px;background:#efefef;border:1px solid #d0d0d0"></div>
<svg class="a" style="left:56px;top:384px;" width="18" height="18" viewBox="0 0 18 18"><path d="M2 2H16V16H2Z" fill="none" stroke="#2030b0" stroke-width="2"/><path d="M4 8H6M4 11H6M4 14H6M7 11H9M7 14H9" stroke="#b03ab0" stroke-width="1.5"/><path d="M8 10L14 4M10 4H14V8" stroke="#8a1a1a" stroke-width="1.8" fill="none"/></svg>
<div class="a" style="left:8px;top:402px;width:22px;height:20px;background:#efefef;border:1px solid #d0d0d0"></div>
<svg class="a" style="left:10px;top:404px;" width="18" height="18" viewBox="0 0 18 18"><circle cx="9" cy="9" r="6" fill="none" stroke="#2030b0" stroke-width="1.5" stroke-dasharray="2 1.5"/><circle cx="9" cy="3" r="1.5" fill="#2030b0"/><circle cx="3" cy="9" r="1.5" fill="#2030b0"/><circle cx="15" cy="9" r="1.5" fill="#b03ab0"/><circle cx="9" cy="15" r="1.5" fill="#2030b0"/></svg>
<div class="a" style="left:31px;top:402px;width:22px;height:20px;background:#efefef;border:1px solid #d0d0d0"></div>
<svg class="a" style="left:33px;top:404px;" width="18" height="18" viewBox="0 0 18 18"><rect x="2" y="2" width="3.5" height="3.5" fill="none" stroke="#2030b0" stroke-width="1.2"/><rect x="7" y="2" width="3.5" height="3.5" fill="none" stroke="#2030b0" stroke-width="1.2"/><rect x="12" y="2" width="3.5" height="3.5" fill="none" stroke="#2030b0" stroke-width="1.2"/><rect x="2" y="7" width="3.5" height="3.5" fill="none" stroke="#2030b0" stroke-width="1.2"/><rect x="7" y="7" width="3.5" height="3.5" fill="none" stroke="#2030b0" stroke-width="1.2"/><rect x="12" y="7" width="3.5" height="3.5" fill="none" stroke="#2030b0" stroke-width="1.2"/><rect x="2" y="12" width="3.5" height="3.5" fill="none" stroke="#2030b0" stroke-width="1.2"/><rect x="7" y="12" width="3.5" height="3.5" fill="none" stroke="#2030b0" stroke-width="1.2"/><rect x="12" y="12" width="3.5" height="3.5" fill="none" stroke="#2030b0" stroke-width="1.2"/></svg>
<div class="a" style="left:54px;top:402px;width:22px;height:20px;background:#efefef;border:1px solid #d0d0d0"></div>
<svg class="a" style="left:56px;top:404px;" width="18" height="18" viewBox="0 0 18 18"><path d="M2 16V2H16V16" fill="none" stroke="#2030b0" stroke-width="2"/><path d="M5 16V5H13V16" fill="none" stroke="#b03ab0" stroke-width="2"/><path d="M8 16V8H10V16" fill="none" stroke="#2030b0" stroke-width="1.5"/></svg>
<div class="a" style="left:8px;top:423px;width:22px;height:20px;background:#efefef;border:1px solid #d0d0d0"></div>
<svg class="a" style="left:10px;top:425px;" width="18" height="18" viewBox="0 0 18 18"><path d="M2 2H7V8H11V16" stroke="#2030b0" stroke-width="2" fill="none"/><path d="M15 3L10 8M10 5V8H13" stroke="#8a1a1a" stroke-width="1.8" fill="none"/><text x="2" y="16" font-size="6" font-weight="bold" font-family="Liberation Sans" fill="#1a1a6a">B</text></svg>
<div class="a" style="left:31px;top:423px;width:22px;height:20px;background:#efefef;border:1px solid #d0d0d0"></div>
<svg class="a" style="left:33px;top:425px;" width="18" height="18" viewBox="0 0 18 18"><path d="M2 2H10A6 6 0 0 1 16 8V16" stroke="#2030b0" stroke-width="2" fill="none"/><path d="M7 11L13 5M10 5H13V8" stroke="#8a1a1a" stroke-width="1.8" fill="none"/><text x="2" y="16" font-size="7" font-weight="bold" font-family="Liberation Sans" fill="#1a1a6a">R</text></svg>
<div class="a" style="left:54px;top:423px;width:22px;height:20px;background:#efefef;border:1px solid #d0d0d0"></div>
<svg class="a" style="left:56px;top:425px;" width="18" height="18" viewBox="0 0 18 18"><path d="M2 2H10A6 6 0 0 1 16 8V16" stroke="#2030b0" stroke-width="2" fill="none"/><path d="M7 11L13 5M10 5H13V8" stroke="#8a1a1a" stroke-width="1.8" fill="none"/><path d="M6 10H2V15H6" stroke="#1a1a6a" stroke-width="2" fill="none"/></svg>
<div class="a" style="left:8px;top:444px;width:22px;height:5px;background:#efefef;border:1px solid #d0d0d0"></div>
<svg class="a" style="left:10px;top:446px;" width="18" height="3" viewBox="0 0 18 3"><rect x="4" y="0" width="10" height="4" fill="#2a3ab0"/></svg>
<div class="a" style="left:31px;top:444px;width:22px;height:5px;background:#efefef;border:1px solid #d0d0d0"></div>
<svg class="a" style="left:33px;top:446px;" width="18" height="3" viewBox="0 0 18 3"><circle cx="9" cy="2" r="2" fill="#2a3ab0"/></svg>
<div class="a" style="left:54px;top:444px;width:22px;height:5px;background:#efefef;border:1px solid #d0d0d0"></div>
<svg class="a" style="left:56px;top:446px;" width="18" height="3" viewBox="0 0 18 3"><path d="M13 0V5M6 3H12" stroke="#2030b0" stroke-width="2"/></svg>
<div class="a" style="left:5px;top:449px;width:563px;height:20px;background:#f6f5f8;border-top:1px solid #d8d8d8"></div>
<svg class="a" style="left:12px;top:451px;" width="18" height="18" viewBox="0 0 18 18"><rect x="3" y="1" width="11" height="11" fill="#3a4ac0"/><rect x="3" y="1" width="11" height="2" fill="#2a2a7a"/><path d="M1 16H8M10 16H17" stroke="#2030b0" stroke-width="2"/><path d="M9 12V15" stroke="#2030b0"/></svg>
<svg class="a" style="left:32px;top:451px;" width="18" height="18" viewBox="0 0 18 18"><path d="M2 5Q9 1 16 4" stroke="#2030b0" stroke-width="2" fill="none"/><path d="M4 15L14 7M14 15L4 7" stroke="#888" stroke-width="1.5"/><circle cx="4" cy="14" r="2.5" fill="none" stroke="#888" stroke-width="1.5"/><circle cx="14" cy="14" r="2.5" fill="none" stroke="#888" stroke-width="1.5"/></svg>
<svg class="a" style="left:51px;top:451px;" width="18" height="18" viewBox="0 0 18 18"><path d="M9 1L12 5H10V8H13V6L17 9L13 12V10H10V13H12L9 17L6 13H8V10H5V12L1 9L5 6V8H8V5H6Z" fill="#2a3ab0"/></svg>
<svg class="a" style="left:71px;top:451px;" width="18" height="18" viewBox="0 0 18 18"><path d="M2 3H8V7H5V10H2ZM16 15H10V11H13V8H16Z" fill="#2a3ab0"/><path d="M10 2L14 2L14 6ZM8 16L4 16L4 12Z" fill="#2a3ab0"/></svg>
<svg class="a" style="left:90px;top:451px;" width="18" height="18" viewBox="0 0 18 18"><rect x="7" y="2" width="9" height="9" fill="none" stroke="#2030b0" stroke-width="2"/><rect x="2" y="7" width="9" height="9" fill="none" stroke="#b03ab0" stroke-width="2"/><path d="M6 11H12M10 9L12 11L10 13" stroke="#8a1a1a" stroke-width="1.5" fill="none"/></svg>
<svg class="a" style="left:110px;top:451px;" width="18" height="18" viewBox="0 0 18 18"><path d="M2 2H16V16H2Z" fill="none" stroke="#2030b0" stroke-width="2"/><path d="M4 8H6M4 11H6M4 14H6M7 11H9M7 14H9" stroke="#b03ab0" stroke-width="1.5"/><path d="M8 10L14 4M10 4H14V8" stroke="#8a1a1a" stroke-width="1.8" fill="none"/></svg>
<svg class="a" style="left:130px;top:451px;" width="18" height="18" viewBox="0 0 18 18"><path d="M3 2H10L13 5V16H3Z" fill="none" stroke="#2030b0" stroke-width="1.5"/><rect x="3" y="10" width="8" height="6" fill="none" stroke="#b03ab0" stroke-width="1.5"/><path d="M13 6L16 9L13 12" stroke="#8a1a1a" stroke-width="1.5" fill="none"/></svg>
<svg class="a" style="left:149px;top:451px;" width="18" height="18" viewBox="0 0 18 18"><path d="M3 2V16M15 2V16" stroke="#2030b0" stroke-width="2"/><path d="M9 2V16" stroke="#b03ab0" stroke-width="2"/><path d="M4 9H14M6 7L4 9L6 11M12 7L14 9L12 11" stroke="#8a1a1a" stroke-width="1.5" fill="none"/></svg>
<svg class="a" style="left:169px;top:451px;" width="18" height="18" viewBox="0 0 18 18"><path d="M2 16V2H16V16" fill="none" stroke="#2030b0" stroke-width="2"/><path d="M5 16V5H13V16" fill="none" stroke="#b03ab0" stroke-width="2"/><path d="M8 16V8H10V16" fill="none" stroke="#2030b0" stroke-width="1.5"/></svg>
<svg class="a" style="left:188px;top:451px;" width="18" height="18" viewBox="0 0 18 18"><rect x="2" y="2" width="3.5" height="3.5" fill="none" stroke="#2030b0" stroke-width="1.2"/><rect x="7" y="2" width="3.5" height="3.5" fill="none" stroke="#2030b0" stroke-width="1.2"/><rect x="12" y="2" width="3.5" height="3.5" fill="none" stroke="#2030b0" stroke-width="1.2"/><rect x="2" y="7" width="3.5" height="3.5" fill="none" stroke="#2030b0" stroke-width="1.2"/><rect x="7" y="7" width="3.5" height="3.5" fill="none" stroke="#2030b0" stroke-width="1.2"/><rect x="12" y="7" width="3.5" height="3.5" fill="none" stroke="#2030b0" stroke-width="1.2"/><rect x="2" y="12" width="3.5" height="3.5" fill="none" stroke="#2030b0" stroke-width="1.2"/><rect x="7" y="12" width="3.5" height="3.5" fill="none" stroke="#2030b0" stroke-width="1.2"/><rect x="12" y="12" width="3.5" height="3.5" fill="none" stroke="#2030b0" stroke-width="1.2"/></svg>
<svg class="a" style="left:208px;top:451px;" width="18" height="18" viewBox="0 0 18 18"><circle cx="9" cy="9" r="6" fill="none" stroke="#2030b0" stroke-width="1.5" stroke-dasharray="2 1.5"/><circle cx="9" cy="3" r="1.5" fill="#2030b0"/><circle cx="3" cy="9" r="1.5" fill="#2030b0"/><circle cx="15" cy="9" r="1.5" fill="#b03ab0"/><circle cx="9" cy="15" r="1.5" fill="#2030b0"/></svg>
<svg class="a" style="left:228px;top:451px;" width="18" height="18" viewBox="0 0 18 18"><text x="6" y="10" font-size="9" font-family="Liberation Sans" fill="#1a1a6a">3</text><path d="M2 14H16" stroke="#2030b0" stroke-width="1.5" stroke-dasharray="3 1.5"/></svg>
<svg class="a" style="left:247px;top:451px;" width="18" height="18" viewBox="0 0 18 18"><path d="M2 16L16 2" stroke="#2030b0" stroke-width="2"/><path d="M6 9L9 12" stroke="#8a1a1a" stroke-width="2"/></svg>
<svg class="a" style="left:267px;top:451px;" width="18" height="18" viewBox="0 0 18 18"><path d="M3 2V14" stroke="#b03ab0" stroke-width="2"/><path d="M3 6H12V12M9 9L12 12L15 9" stroke="#6a1a1a" stroke-width="1.8" fill="none"/><path d="M2 15H16" stroke="#2030b0" stroke-width="2"/></svg>
<svg class="a" style="left:286px;top:451px;" width="18" height="18" viewBox="0 0 18 18"><path d="M3 2V16" stroke="#2030b0" stroke-width="2"/><path d="M3 5H13V12" stroke="#6a1a1a" stroke-width="1.8" fill="none"/><path d="M2 15H16" stroke="#b03ab0" stroke-width="2"/></svg>
<svg class="a" style="left:78px;top:169px;" width="228" height="280" viewBox="0 0 228 280">
<path d="M54 170V246H228" fill="none" stroke="#301015" stroke-width="1.5"/>
<path d="M62 188L96 58A73.5 73.5 0 0 1 228 43" fill="none" stroke="#b83450" stroke-width="1" stroke-dasharray="4 1"/>
<path d="M62 188V232.5H228" fill="none" stroke="#b02a40" stroke-width="1"/>
<path d="M48.5 65V188.5M48.5 65.5H96M48.5 188.5H62M94.5 65V249" stroke="#e0e0e0" stroke-width="0.9" fill="none"/>
<circle cx="166.4" cy="83" r="36.3" fill="none" stroke="#90c870" stroke-width="1" stroke-dasharray="5 1.5"/>
<path d="M130 71.6L202 95.5" stroke="#e8e8e8" stroke-width="0.9" stroke-dasharray="6 1"/>
<g font-family="Liberation Mono" fill="#e8e8e8" font-size="9">
<text transform="translate(48 144) rotate(-90)" font-size="10">82.66</text>
<text transform="translate(170 76) rotate(21)" font-size="9">050.00</text>
<text transform="translate(168 29) rotate(90)" font-size="8.5">R50.00</text>
<text x="65" y="245" font-size="8.5">21.63</text>
<text x="150" y="276" font-size="8.5">140.00</text>
</g>
<path d="M63 277.5H228M63 275V280" stroke="#e0e0e0" stroke-width="0.9"/>
<path d="M161 12L163 8L165 12" stroke="#ddd" stroke-width="0.8" fill="none"/>
</svg>
<div class="a" style="left:5px;top:469px;width:563px;height:14px;background:#f0f0f0;border-top:1px solid #c8c8c8"></div>
<div class="a t" style="left:8px;top:474px;font-size:9px;color:#111;letter-spacing:-1px">X:544.7 Y:309.7</div>
<div class="a" style="left:306px;top:65px;width:431px;height:476px;background:#789ed2;border-top:1px solid #5f86bb"></div>
<div class="a" style="left:312px;top:69px;width:11px;height:11px;background:#d84a3a;border:1px solid #f0b0a0"></div>
<div class="a t" style="left:314px;top:70px;font-size:9px;font-weight:bold;color:#fff">K</div>
<div class="a t" style="left:388px;top:71px;font-size:8.8px;color:#34466a">PNC-CAM [C:\KAPPNC\DATA\PARTS\] Portable NC Ver4.23 Level1</div>
<div class="a" style="left:680px;top:73px;width:8px;height:2px;background:#2a3a5a"></div>
<div class="a" style="left:695px;top:69px;width:9px;height:7px;border:2px solid #2a3a5a"></div>
<div class="a" style="left:707px;top:66px;width:27px;height:12px;background:#c9504a"></div>
<svg class="a" style="left:716px;top:68px;" width="9" height="8" viewBox="0 0 9 8"><path d="M1 1L8 7M8 1L1 7" stroke="#fff" stroke-width="1.6"/></svg>
<div class="a" style="left:311px;top:84px;width:422px;height:457px;background:#f2f3f5"></div>
<div class="a" style="left:311px;top:84px;width:422px;height:12px;background:#f7f8fa"></div>
<div class="mi" style="left:316px;top:86px">File(F)</div>
<div class="mi" style="left:343px;top:86px">Create(M)</div>
<div class="mi" style="left:385px;top:86px">Setting(S)</div>
<div class="mi" style="left:425px;top:86px">Screen(W)</div>
<div class="mi" style="left:467px;top:86px">Nesting(N)</div>
<div class="mi" style="left:510px;top:86px">NC(P)</div>
<div class="mi" style="left:540px;top:86px">Information(I)</div>
<div class="mi" style="left:594px;top:86px">Option(O)</div>
<div class="mi" style="left:637px;top:86px">Database(D)</div>
<div class="a" style="left:311px;top:222px;width:220px;height:255px;background:#000"></div>
<div class="a msg" style="left:311px;top:479px;width:220px;height:47px;padding:1px 0 0 3px">Select next operation
NC : Cut  : Please select [Cut Start Point]
NC : Copy : Please select Copy source Part[s
NC : Copy : Please select Copy destination P
NC : Cut  : Please select [Cut Start Point]</div>
<div class="a" style="left:311px;top:96px;width:422px;height:21px;background:#f0f0f2"></div>
<div class="a" style="left:311px;top:117px;width:422px;height:1px;background:#a8a8a8"></div>
<div class="a" style="left:311px;top:96px;width:422px;height:1px;background:#c8c8c8"></div>
<svg class="a" style="left:313px;top:99px;" width="15" height="15" viewBox="0 0 15 15"><path d="M1 1H10L14 4V14H1Z" fill="#f4f4f4" stroke="#aaa"/><path d="M3 4H10M3 6H11" stroke="#bbb"/><text x="1.5" y="12.5" font-size="5.5" font-family="Liberation Sans" fill="#999">NEW</text></svg>
<svg class="a" style="left:332px;top:99px;" width="15" height="15" viewBox="0 0 15 15"><path d="M4 1H11L13 3V6H4Z" fill="#e4e4e4" stroke="#b4b4b4" stroke-width=".8"/><path d="M1 6H14V14H1Z" fill="#a8a8a8"/><rect x="3" y="8" width="9" height="3" fill="#c8c8c8"/></svg>
<svg class="a" style="left:351px;top:99px;" width="15" height="15" viewBox="0 0 15 15"><path d="M5 1H13L11 5H3Z" fill="#fff" stroke="#222" stroke-width=".9"/><path d="M1 6H15V12H1Z" fill="#2a2a2a"/><rect x="3" y="8" width="9" height="2.5" fill="#a89070"/><rect x="1" y="12" width="14" height="2" fill="#666"/></svg>
<div class="a" style="left:374px;top:97px;width:19px;height:19px;background:#c4daf2;border:1px solid #a8c4e6"></div>
<div class="a t" style="left:376px;top:102px;font-size:8px;font-weight:bold;color:#1a1a3a;letter-spacing:-0.3px">Free</div>
<svg class="a" style="left:398px;top:99px;" width="12" height="15" viewBox="0 0 12 15"><path d="M4 3V14" stroke="#111" stroke-width="2"/><path d="M7 5H11" stroke="#111" stroke-width="2"/><path d="M1 5L4 1L7 5Z" fill="#c01a1a"/></svg>
<svg class="a" style="left:415px;top:99px;" width="14" height="15" viewBox="0 0 14 15"><path d="M1 14L13 2" stroke="#111" stroke-width="2"/><circle cx="7" cy="8" r="2" fill="#d01a1a"/></svg>
<svg class="a" style="left:438px;top:103px;" width="6" height="6" viewBox="0 0 6 6"><circle cx="3" cy="3" r="2.3" fill="#d02030"/></svg>
<div class="a" style="left:449px;top:97px;width:19px;height:19px;background:#c4daf2;border:1px solid #a8c4e6"></div>
<svg class="a" style="left:451px;top:99px;" width="15" height="15" viewBox="0 0 15 15"><path d="M2 1L2 13L5 10L8 14L10 13L7 9H11Z" fill="#1a2a9a"/><rect x="8" y="8" width="6" height="6" fill="#e8e040"/></svg>
<div class="a" style="left:470px;top:98px;width:1px;height:17px;background:#a0a0a0"></div>
<div class="a" style="left:473px;top:97px;width:19px;height:20px;background:#c4daf2;border:1px solid #a4c0e4"></div>
<svg class="a" style="left:475px;top:99px;" width="15" height="16" viewBox="0 0 15 16"><path d="M0 9H15V16H1L0 14Z" fill="#111"/><rect x="2" y="11" width="12" height="4" fill="#ecec40"/><path d="M2 9.5H14" stroke="#8a8a40" stroke-width="1"/><path d="M3 1H10V5H12.5L8.5 8.5L4.5 5H7V3.5H3Z" fill="#6a1414"/></svg>
<svg class="a" style="left:495px;top:99px;" width="15" height="16" viewBox="0 0 15 16"><path d="M0 9H15V16H1L0 14Z" fill="#111"/><rect x="2" y="11" width="12" height="4" fill="#ecec40"/><path d="M2 9.5H14" stroke="#8a8a40" stroke-width="1"/><path d="M4 8V3H9V0.5L13 4L9 7.5V5.5H6.5V8Z" fill="#6a1414"/></svg>
<svg class="a" style="left:513px;top:99px;" width="15" height="16" viewBox="0 0 15 16"><path d="M0 9H15V16H1L0 14Z" fill="#111"/><rect x="2" y="11" width="12" height="4" fill="#ecec40"/><path d="M2 9.5H14" stroke="#8a8a40" stroke-width="1"/><text x="0" y="7.5" font-size="8" font-weight="bold" font-family="Liberation Sans" fill="#6a1414" textLength="15" lengthAdjust="spacingAndGlyphs">ALL</text></svg>
<svg class="a" style="left:533px;top:99px;" width="15" height="16" viewBox="0 0 15 16"><path d="M0 9H15V16H1L0 14Z" fill="#111"/><rect x="2" y="11" width="12" height="4" fill="#ecec40"/><path d="M2 9.5H14" stroke="#8a8a40" stroke-width="1"/><path d="M1 3.5H8M3.5 1L1 3.5L3.5 6M7 7H14M11.5 4.5L14 7L11.5 9.5" stroke="#6a1414" stroke-width="2" fill="none"/></svg>
<svg class="a" style="left:552px;top:99px;" width="15" height="16" viewBox="0 0 15 16"><path d="M0 9H15V16H1L0 14Z" fill="#111"/><rect x="2" y="11" width="12" height="4" fill="#ecec40"/><path d="M2 9.5H14" stroke="#8a8a40" stroke-width="1"/><text x="0" y="7.5" font-size="7" font-weight="bold" font-family="Liberation Sans" fill="#6a1414" textLength="15" lengthAdjust="spacingAndGlyphs">Prev</text></svg>
<div class="a" style="left:572px;top:98px;width:1px;height:17px;background:#a0a0a0"></div>
<svg class="a" style="left:577px;top:99px;" width="16" height="16" viewBox="0 0 16 16"><circle cx="6.5" cy="6.5" r="5.5" fill="#7ac8b8" stroke="#1a4a4a" stroke-width="1.5"/><rect x="4" y="2.5" width="5" height="7" fill="#fff" stroke="#222" stroke-width=".8"/><path d="M10 10L14.5 14.5" stroke="#1a2a6a" stroke-width="2.5"/></svg>
<svg class="a" style="left:596px;top:99px;" width="16" height="16" viewBox="0 0 16 16"><circle cx="6.5" cy="6.5" r="5.5" fill="#7ac8b8" stroke="#1a4a4a" stroke-width="1.5"/><rect x="4" y="3" width="2" height="7" fill="#2a4a2a"/><rect x="7" y="3" width="2" height="7" fill="#2a4a2a"/><path d="M10 10L14.5 14.5" stroke="#1a2a6a" stroke-width="2.5"/></svg>
<svg class="a" style="left:615px;top:99px;" width="16" height="16" viewBox="0 0 16 16"><circle cx="6.5" cy="6.5" r="5.5" fill="#7ac8b8" stroke="#1a4a4a" stroke-width="1.5"/><path d="M4 4L9 9M9 4L4 9" stroke="#1a1a1a" stroke-width="1.5"/><path d="M10 10L14.5 14.5" stroke="#1a2a6a" stroke-width="2.5"/></svg>
<svg class="a" style="left:634px;top:99px;" width="16" height="16" viewBox="0 0 16 16"><circle cx="6.5" cy="6.5" r="5.5" fill="#7ac8b8" stroke="#1a4a4a" stroke-width="1.5"/><path d="M6.5 2.5V10.5M2.5 6.5H10.5" stroke="#1a3a5a" stroke-width="1.2"/><path d="M10 10L14.5 14.5" stroke="#1a2a6a" stroke-width="2.5"/></svg>
<div class="a" style="left:653px;top:98px;width:1px;height:17px;background:#a0a0a0"></div>
<svg class="a" style="left:659px;top:99px;" width="15" height="15" viewBox="0 0 15 15"><circle cx="7.5" cy="7.5" r="6.5" fill="#2a4ab0" stroke="#d4dcf0"/><text x="4.5" y="11" font-size="9" font-weight="bold" font-family="Liberation Sans" fill="#fff">?</text></svg>
<svg class="a" style="left:677px;top:100px;" width="15" height="14" viewBox="0 0 15 14"><path d="M1 7L14 1V13Z" fill="#3a8a3a"/></svg>
<svg class="a" style="left:697px;top:100px;" width="15" height="14" viewBox="0 0 15 14"><path d="M14 7L1 1V13Z" fill="#a8a8a8"/></svg>
<div class="a" style="left:715px;top:98px;width:1px;height:17px;background:#a0a0a0"></div>
<svg class="a" style="left:313px;top:121px;" width="16" height="15" viewBox="0 0 16 15"><text x="0" y="7" font-size="8" font-weight="bold" font-family="Liberation Sans" fill="#1a1a5a">M</text><rect x="7" y="3" width="8" height="2.5" fill="#7ac8d8"/><path d="M1 9H15M1 11.5H15M1 14H15M15 5V15" stroke="#111" stroke-width="1.2"/></svg>
<svg class="a" style="left:332px;top:121px;" width="16" height="15" viewBox="0 0 16 15"><text x="0" y="7" font-size="8" font-weight="bold" font-family="Liberation Sans" fill="#1a1a5a">T</text><rect x="7" y="3" width="8" height="2.5" fill="#3a7a3a"/><rect x="3" y="7" width="12" height="8" fill="#e8e860"/><path d="M3 9H15M3 11.5H15M3 14H15M3 6V15M15 5V15" stroke="#111" stroke-width="1"/></svg>
<svg class="a" style="left:351px;top:121px;" width="16" height="15" viewBox="0 0 16 15"><path d="M0 4L4 0V2.5H12V0L16 4L12 8V5.5H4V8Z" fill="#1a2a8a"/><rect x="1" y="8" width="14" height="7" fill="#e8e860"/><path d="M5 10V13M7.5 10V13M10 10V13" stroke="#222"/></svg>
<svg class="a" style="left:370px;top:121px;" width="16" height="15" viewBox="0 0 16 15"><rect x="0.5" y="1.5" width="14" height="13" fill="#fff" stroke="#777" stroke-width=".8"/><text x="1.5" y="10" font-size="7" font-weight="bold" font-family="Liberation Sans" fill="#111">Esc</text></svg>
<div class="a" style="left:311px;top:140px;width:422px;height:1px;background:#a8a8a8"></div>
<svg class="a" style="left:313.0px;top:145px;" width="16" height="15" viewBox="0 0 16 15"><path d="M0 1H11L0 11Z" fill="#d01a1a"/><path d="M12 1H15V4M15 1L11 5M1 13H4M1 13L3 11M8 8L14 14M14 10V14H10" stroke="#1a2a8a" stroke-width="2" fill="none"/></svg>
<svg class="a" style="left:332.3px;top:145px;" width="16" height="15" viewBox="0 0 16 15"><rect x="1" y="1" width="4" height="12" fill="#fff" stroke="#d01a1a" stroke-width="1.6"/><rect x="0" y="12" width="16" height="3" fill="#d01a1a"/><path d="M6 2.5H12V10H6M9 7H14" stroke="#1a2a8a" stroke-width="2" fill="none"/></svg>
<svg class="a" style="left:351.6px;top:145px;" width="16" height="15" viewBox="0 0 16 15"><rect x="0" y="1" width="4.5" height="14" fill="#d01a1a"/><path d="M6 4H13V11M6 4L9 1M6 4L9 7" stroke="#1a2a8a" stroke-width="2" fill="none"/><path d="M6 14H15" stroke="#f0c8c8"/></svg>
<svg class="a" style="left:370.9px;top:145px;" width="16" height="15" viewBox="0 0 16 15"><path d="M0 11L7 3V11Z" fill="#d01a1a"/><path d="M8.5 0V15" stroke="#1a2a8a" stroke-width="1.5"/><path d="M10.5 3L14 11" stroke="#222" stroke-width="1.2" stroke-dasharray="1.5 1"/></svg>
<svg class="a" style="left:390.2px;top:145px;" width="16" height="15" viewBox="0 0 16 15"><rect x="0" y="1" width="8" height="14" fill="#d01a1a" stroke="#5a1010" stroke-width=".6"/><path d="M9 1.5H14" stroke="#111" stroke-width="1.2"/><rect x="8" y="6" width="7" height="9" fill="#fff"/><path d="M11 9H9V14H12" stroke="#111" stroke-width="1.3" fill="none"/></svg>
<svg class="a" style="left:409.5px;top:145px;" width="16" height="15" viewBox="0 0 16 15"><path d="M0 1L4 2.5V13.5L0 15Z" fill="#d01a1a"/><path d="M16 1L12 2.5V13.5L16 15Z" fill="#d01a1a"/><path d="M5 7.5H11M6.5 5.5L4.5 7.5L6.5 9.5M9.5 5.5L11.5 7.5L9.5 9.5" stroke="#1a2a8a" stroke-width="2" fill="none"/></svg>
<svg class="a" style="left:428px;top:151px;" width="5" height="4" viewBox="0 0 5 4"><path d="M0 0H5L2.5 3Z" fill="#222"/></svg>
<svg class="a" style="left:437px;top:145px;" width="16" height="15" viewBox="0 0 16 15"><path d="M1 14V8H6M8 0V5M15 8H10" stroke="#d01a1a" stroke-width="2.2" fill="none"/><path d="M3 3L13 13M13 3L3 13" stroke="#1a2a8a" stroke-width="1.5"/><circle cx="8" cy="8" r="2.2" fill="#1a2a8a"/></svg>
<svg class="a" style="left:457px;top:151px;" width="5" height="4" viewBox="0 0 5 4"><path d="M0 0H5L2.5 3Z" fill="#222"/></svg>
<svg class="a" style="left:465px;top:145px;" width="15" height="15" viewBox="0 0 15 15"><path d="M0 0H7V4H4V7H0ZM15 15H8V11H11V8H15ZM9 0H15V6L12 3.5L9 6ZM0 9L3 12L6 9V15H0Z" fill="#1a2a8a"/><path d="M6 6L9 9" stroke="#1a2a8a" stroke-width="2"/></svg>
<svg class="a" style="left:484px;top:145px;" width="15" height="15" viewBox="0 0 15 15"><path d="M1 1H7V6H1ZM8 1H14V6H8ZM9 8H14V14" stroke="#111" stroke-width="1.6" fill="none"/><rect x="0" y="8" width="7" height="7" fill="#d01a1a"/><path d="M7 9L4 7" stroke="#111" stroke-width="1.5"/></svg>
<svg class="a" style="left:503px;top:145px;" width="15" height="15" viewBox="0 0 15 15"><circle cx="4" cy="4" r="4" fill="#d01a1a"/><path d="M6 7L10 11L7 14M10 3L14 7L12 13" stroke="#111" stroke-width="1.5" stroke-dasharray="1.5 1" fill="none"/></svg>
<svg class="a" style="left:522px;top:145px;" width="10" height="15" viewBox="0 0 10 15"><path d="M0 8L9 0V15Z" fill="#1a2a8a"/><circle cx="6" cy="8" r="1.5" fill="#fff"/></svg>
<svg class="a" style="left:313px;top:162px;" width="16" height="16" viewBox="0 0 16 16"><path d="M0 16V8L3 6L9 12V16Z" fill="#d01a1a"/><rect x="9" y="13" width="7" height="3" fill="#2a8a3a"/><path d="M2.5 0V7" stroke="#2a8a3a" stroke-width="2"/><path d="M5 4H13V12M5 4L8 1M5 4L8 7" stroke="#1a2a8a" stroke-width="2" fill="none"/></svg>
<svg class="a" style="left:332px;top:164px;" width="16" height="12" viewBox="0 0 16 12"><path d="M0 6H16" stroke="#6a3a1a" stroke-width="1.5"/><rect x="4" y="3.5" width="4" height="5" fill="#fff" stroke="#2a8a3a" stroke-width="1.6"/><rect x="9" y="3.5" width="4" height="5" fill="#fff" stroke="#2a8a3a" stroke-width="1.6"/></svg>
<svg class="a" style="left:352px;top:169px;" width="5" height="4" viewBox="0 0 5 4"><path d="M0 0H5L2.5 3Z" fill="#222"/></svg>
<svg class="a" style="left:360px;top:162px;" width="16" height="16" viewBox="0 0 16 16"><path d="M0 4L4 0L13 9L9 13Z" fill="#6a7a2a"/><path d="M2 4L4 6M5 7L7 9" stroke="#111" stroke-width="1.3"/><path d="M9 13L13 9" stroke="#111" stroke-width="1.8"/><rect x="9" y="11" width="6" height="5" fill="#e8e040"/><text x="8" y="8" font-size="8" font-weight="bold" font-family="Liberation Sans" fill="#1a2a8a">A</text></svg>
<svg class="a" style="left:380px;top:162px;" width="16" height="16" viewBox="0 0 16 16"><path d="M0 4L4 0L13 9L9 13Z" fill="#6a7a2a"/><path d="M2 4L4 6M5 7L7 9" stroke="#111" stroke-width="1.3"/><path d="M9 13L13 9" stroke="#111" stroke-width="1.8"/><rect x="9" y="11" width="6" height="5" fill="#e8e040"/><text x="9" y="8" font-size="8" font-weight="bold" font-family="Liberation Sans" fill="#1a2a8a">P</text></svg>
<svg class="a" style="left:399px;top:162px;" width="16" height="16" viewBox="0 0 16 16"><path d="M0 4L4 0L13 9L9 13Z" fill="#6a7a2a"/><path d="M2 4L4 6M5 7L7 9" stroke="#111" stroke-width="1.3"/><path d="M9 13L13 9" stroke="#111" stroke-width="1.8"/><rect x="9" y="11" width="6" height="5" fill="#e8e040"/><text x="9" y="8" font-size="8" font-weight="bold" font-family="Liberation Sans" fill="#1a2a8a">E</text></svg>
<svg class="a" style="left:418px;top:162px;" width="16" height="16" viewBox="0 0 16 16"><rect x="7" y="1" width="3" height="14" fill="#a0a8b8"/><path d="M6.5 1V16" stroke="#111" stroke-width="1.2"/><path d="M0 8H16M3 5.5L0.5 8L3 10.5M13 5.5L15.5 8L13 10.5" stroke="#1a2a8a" stroke-width="2.2" fill="none"/></svg>
<svg class="a" style="left:437px;top:162px;" width="16" height="16" viewBox="0 0 16 16"><path d="M0 6L6 0L9 3L3 9Z" fill="#a8a8a8"/><path d="M0 9L6 3L12 9L6 15Z" fill="#6a7a2a"/><path d="M8 15L15 8L16 16Z" fill="#e8e040"/><path d="M9 10L14 15M14 10L9 15" stroke="#d01a1a" stroke-width="2"/><text x="9" y="7" font-size="7" font-family="Liberation Sans" fill="#111">A</text></svg>
<svg class="a" style="left:456px;top:162px;" width="16" height="16" viewBox="0 0 16 16"><path d="M0 6L6 0L9 3L3 9Z" fill="#a8a8a8"/><path d="M0 9L6 3L12 9L6 15Z" fill="#6a7a2a"/><path d="M8 15L15 8L16 16Z" fill="#e8e040"/><path d="M9 2L14 7M14 2L9 7" stroke="#d01a1a" stroke-width="2"/><path d="M8 10L13 15" stroke="#d01a1a" stroke-width="2.5"/></svg>
<div class="a" style="left:311px;top:179px;width:422px;height:1px;background:#d0d0d0"></div>
<div class="a" style="left:313px;top:180px;width:61px;height:12px;background:linear-gradient(#f8f8f8,#e8e8e8);border:1px solid #c8c8c8"></div>
<div class="a t" style="left:316px;top:182px;font-size:8px;color:#222">Manual</div>
<svg class="a" style="left:367px;top:184px;" width="6" height="4" viewBox="0 0 6 4"><path d="M0.5 0.5L3 3L5.5 0.5" stroke="#444" fill="none"/></svg>
<div class="a" style="left:376px;top:180px;width:157px;height:12px;background:#d4ecc8;border:1px solid #b8d4b0"></div>
<div class="a t" style="left:381px;top:182px;font-size:8px;color:#1a2a1a;font-weight:bold;letter-spacing:-0.1px">Leadin On Side: 1 Arc Variable R5</div>
<div class="a" style="left:311px;top:193px;width:220px;height:29px;background:#f0f0f2"></div>
<div class="a" style="left:313px;top:195px;width:33px;height:26px;background:#ececec;border-right:1px solid #d4d4d4"></div>
<div class="a" style="left:346px;top:195px;width:30px;height:26px;background:#d4e4f4;border-right:1px solid #d4d4d4"></div>
<div class="a" style="left:376px;top:195px;width:26px;height:26px;background:#d8e8f6;border-right:1px solid #d4d4d4"></div>
<div class="a" style="left:402px;top:195px;width:35px;height:26px;background:#ececec;border-right:1px solid #d4d4d4"></div>
<div class="a" style="left:437px;top:195px;width:28px;height:26px;background:#e8e8e8;border-right:1px solid #d4d4d4"></div>
<div class="a" style="left:500px;top:195px;width:31px;height:26px;background:#ececec;border-right:1px solid #d4d4d4"></div>
<svg class="a" style="left:319px;top:199px;" width="18" height="18" viewBox="0 0 18 18"><path d="M2 5V14M16 4V13M5 2H13M5 16H13" stroke="#d01a1a" stroke-width="2.4" fill="none"/><path d="M13 0V5L16 2.5ZM5 13V18L2 15.5Z" fill="#d01a1a"/><path d="M0 9H3M15 9H18" stroke="#d01a1a" stroke-width="1.2"/><text x="5" y="13.5" font-size="10" font-weight="bold" font-style="italic" font-family="Liberation Sans" fill="#1a1a5a">L</text></svg>
<svg class="a" style="left:351px;top:199px;" width="18" height="18" viewBox="0 0 18 18"><path d="M2 5V14M16 4V13M5 2H13M5 16H13" stroke="#d01a1a" stroke-width="2.4" fill="none"/><path d="M13 0V5L16 2.5ZM5 13V18L2 15.5Z" fill="#d01a1a"/><path d="M0 9H3M15 9H18" stroke="#d01a1a" stroke-width="1.2"/><text x="5" y="13.5" font-size="10" font-weight="bold" font-style="italic" font-family="Liberation Sans" fill="#1a1a5a">R</text></svg>
<svg class="a" style="left:379px;top:198px;" width="22" height="15" viewBox="0 0 22 15"><rect x="1.5" y="1.5" width="11" height="11" fill="#fff" stroke="#6a2a8a" stroke-width="3"/><text x="4" y="11.5" font-size="9" font-weight="bold" font-family="Liberation Sans" fill="#1a1a4a">1</text><path d="M20 1L13 7L20 13" stroke="#d01a1a" stroke-width="2.6" fill="none"/></svg>
<svg class="a" style="left:409px;top:198px;" width="22" height="21" viewBox="0 0 22 21"><rect x="1.5" y="1.5" width="13" height="11" fill="#fff" stroke="#6a2a8a" stroke-width="3"/><text x="5" y="11.5" font-size="9" font-weight="bold" font-family="Liberation Sans" fill="#1a1a4a">1</text><path d="M12 11H21M14 11V20" stroke="#d01a1a" stroke-width="2.8"/></svg>
<svg class="a" style="left:441px;top:198px;" width="22" height="15" viewBox="0 0 22 15"><rect x="1.5" y="1.5" width="11" height="11" fill="#fff" stroke="#6a2a8a" stroke-width="3"/><text x="4" y="11.5" font-size="9" font-weight="bold" font-family="Liberation Sans" fill="#1a1a4a">2</text><path d="M20 1L13 7L20 13" stroke="#d01a1a" stroke-width="2.6" fill="none"/></svg>
<svg class="a" style="left:505px;top:198px;" width="22" height="15" viewBox="0 0 22 15"><rect x="1.5" y="1.5" width="11" height="11" fill="#fff" stroke="#6a2a8a" stroke-width="3"/><text x="4" y="11.5" font-size="9" font-weight="bold" font-family="Liberation Sans" fill="#1a1a4a">3</text><path d="M20 1L13 7L20 13" stroke="#d01a1a" stroke-width="2.6" fill="none"/></svg>
<svg class="a" style="left:311px;top:222px;" width="220" height="255" viewBox="0 0 220 255"><path d="M8.0 32.5L9.5 22.5Q11.0 8.5 20.0 8.5Q30.0 8.5 30.5 24.5V32.5Z" fill="none" stroke="#8a2c3a" stroke-width="0.9"/><circle cx="20.0" cy="16.0" r="4.3" fill="none" stroke="#a83040" stroke-width="0.9"/><path d="M9.0 31.5L21.0 15.5" stroke="#a8a8a8" stroke-width=".8" stroke-dasharray="2 1.5"/><path d="M19.0 18.5L22.0 12.5" stroke="#90d080" stroke-width="1.2"/><rect x="7.0" y="31.5" width="3" height="3" fill="none" stroke="#90d080" stroke-width=".9"/><path d="M35.5 32.5L37.0 22.5Q38.5 8.5 47.5 8.5Q57.5 8.5 58.0 24.5V32.5Z" fill="none" stroke="#8a2c3a" stroke-width="0.9"/><circle cx="47.5" cy="16.0" r="4.3" fill="none" stroke="#a83040" stroke-width="0.9"/><path d="M36.5 31.5L48.5 15.5" stroke="#a8a8a8" stroke-width=".8" stroke-dasharray="2 1.5"/><path d="M46.5 18.5L49.5 12.5" stroke="#90d080" stroke-width="1.2"/><rect x="34.5" y="31.5" width="3" height="3" fill="none" stroke="#90d080" stroke-width=".9"/><path d="M8.0 61.6L9.5 51.6Q11.0 37.6 20.0 37.6Q30.0 37.6 30.5 53.6V61.6Z" fill="none" stroke="#8a2c3a" stroke-width="0.9"/><circle cx="20.0" cy="45.1" r="4.3" fill="none" stroke="#a83040" stroke-width="0.9"/><path d="M9.0 60.6L21.0 44.6" stroke="#a8a8a8" stroke-width=".8" stroke-dasharray="2 1.5"/><path d="M19.0 47.6L22.0 41.6" stroke="#90d080" stroke-width="1.2"/><rect x="7.0" y="60.6" width="3" height="3" fill="none" stroke="#90d080" stroke-width=".9"/><path d="M35.5 61.6L37.0 51.6Q38.5 37.6 47.5 37.6Q57.5 37.6 58.0 53.6V61.6Z" fill="none" stroke="#8a2c3a" stroke-width="0.9"/><circle cx="47.5" cy="45.1" r="4.3" fill="none" stroke="#a83040" stroke-width="0.9"/><path d="M36.5 60.6L48.5 44.6" stroke="#a8a8a8" stroke-width=".8" stroke-dasharray="2 1.5"/><path d="M46.5 47.6L49.5 41.6" stroke="#90d080" stroke-width="1.2"/><rect x="34.5" y="60.6" width="3" height="3" fill="none" stroke="#90d080" stroke-width=".9"/><path d="M8.0 90.7L9.5 80.7Q11.0 66.7 20.0 66.7Q30.0 66.7 30.5 82.7V90.7Z" fill="none" stroke="#8a2c3a" stroke-width="0.9"/><circle cx="20.0" cy="74.2" r="4.3" fill="none" stroke="#a83040" stroke-width="0.9"/><path d="M9.0 89.7L21.0 73.7" stroke="#a8a8a8" stroke-width=".8" stroke-dasharray="2 1.5"/><path d="M19.0 76.7L22.0 70.7" stroke="#90d080" stroke-width="1.2"/><rect x="7.0" y="89.7" width="3" height="3" fill="none" stroke="#90d080" stroke-width=".9"/><path d="M35.5 90.7L37.0 80.7Q38.5 66.7 47.5 66.7Q57.5 66.7 58.0 82.7V90.7Z" fill="none" stroke="#8a2c3a" stroke-width="0.9"/><circle cx="47.5" cy="74.2" r="4.3" fill="none" stroke="#a83040" stroke-width="0.9"/><path d="M36.5 89.7L48.5 73.7" stroke="#a8a8a8" stroke-width=".8" stroke-dasharray="2 1.5"/><path d="M46.5 76.7L49.5 70.7" stroke="#90d080" stroke-width="1.2"/><rect x="34.5" y="89.7" width="3" height="3" fill="none" stroke="#90d080" stroke-width=".9"/><path d="M8.0 119.80000000000001L9.5 109.80000000000001Q11.0 95.80000000000001 20.0 95.80000000000001Q30.0 95.80000000000001 30.5 111.80000000000001V119.80000000000001Z" fill="none" stroke="#8a2c3a" stroke-width="0.9"/><circle cx="20.0" cy="103.30000000000001" r="4.3" fill="none" stroke="#a83040" stroke-width="0.9"/><path d="M9.0 118.80000000000001L21.0 102.80000000000001" stroke="#a8a8a8" stroke-width=".8" stroke-dasharray="2 1.5"/><path d="M19.0 105.80000000000001L22.0 99.80000000000001" stroke="#90d080" stroke-width="1.2"/><rect x="7.0" y="118.80000000000001" width="3" height="3" fill="none" stroke="#90d080" stroke-width=".9"/><path d="M35.5 119.80000000000001L37.0 109.80000000000001Q38.5 95.80000000000001 47.5 95.80000000000001Q57.5 95.80000000000001 58.0 111.80000000000001V119.80000000000001Z" fill="none" stroke="#8a2c3a" stroke-width="0.9"/><circle cx="47.5" cy="103.30000000000001" r="4.3" fill="none" stroke="#a83040" stroke-width="0.9"/><path d="M36.5 118.80000000000001L48.5 102.80000000000001" stroke="#a8a8a8" stroke-width=".8" stroke-dasharray="2 1.5"/><path d="M46.5 105.80000000000001L49.5 99.80000000000001" stroke="#90d080" stroke-width="1.2"/><rect x="34.5" y="118.80000000000001" width="3" height="3" fill="none" stroke="#90d080" stroke-width=".9"/><path d="M8.0 148.9L9.5 138.9Q11.0 124.9 20.0 124.9Q30.0 124.9 30.5 140.9V148.9Z" fill="none" stroke="#8a2c3a" stroke-width="0.9"/><circle cx="20.0" cy="132.4" r="4.3" fill="none" stroke="#a83040" stroke-width="0.9"/><path d="M9.0 147.9L21.0 131.9" stroke="#a8a8a8" stroke-width=".8" stroke-dasharray="2 1.5"/><path d="M19.0 134.9L22.0 128.9" stroke="#90d080" stroke-width="1.2"/><rect x="7.0" y="147.9" width="3" height="3" fill="none" stroke="#90d080" stroke-width=".9"/><path d="M35.5 148.9L37.0 138.9Q38.5 124.9 47.5 124.9Q57.5 124.9 58.0 140.9V148.9Z" fill="none" stroke="#8a2c3a" stroke-width="0.9"/><circle cx="47.5" cy="132.4" r="4.3" fill="none" stroke="#a83040" stroke-width="0.9"/><path d="M36.5 147.9L48.5 131.9" stroke="#a8a8a8" stroke-width=".8" stroke-dasharray="2 1.5"/><path d="M46.5 134.9L49.5 128.9" stroke="#90d080" stroke-width="1.2"/><rect x="34.5" y="147.9" width="3" height="3" fill="none" stroke="#90d080" stroke-width=".9"/><path d="M8.0 178.0L9.5 168.0Q11.0 154.0 20.0 154.0Q30.0 154.0 30.5 170.0V178.0Z" fill="none" stroke="#8a2c3a" stroke-width="0.9"/><circle cx="20.0" cy="161.5" r="4.3" fill="none" stroke="#a83040" stroke-width="0.9"/><path d="M9.0 177.0L21.0 161.0" stroke="#a8a8a8" stroke-width=".8" stroke-dasharray="2 1.5"/><path d="M19.0 164.0L22.0 158.0" stroke="#90d080" stroke-width="1.2"/><rect x="7.0" y="177.0" width="3" height="3" fill="none" stroke="#90d080" stroke-width=".9"/><path d="M35.5 178.0L37.0 168.0Q38.5 154.0 47.5 154.0Q57.5 154.0 58.0 170.0V178.0Z" fill="none" stroke="#8a2c3a" stroke-width="0.9"/><circle cx="47.5" cy="161.5" r="4.3" fill="none" stroke="#a83040" stroke-width="0.9"/><path d="M36.5 177.0L48.5 161.0" stroke="#a8a8a8" stroke-width=".8" stroke-dasharray="2 1.5"/><path d="M46.5 164.0L49.5 158.0" stroke="#90d080" stroke-width="1.2"/><rect x="34.5" y="177.0" width="3" height="3" fill="none" stroke="#90d080" stroke-width=".9"/><path d="M8.0 207.10000000000002L9.5 197.10000000000002Q11.0 183.10000000000002 20.0 183.10000000000002Q30.0 183.10000000000002 30.5 199.10000000000002V207.10000000000002Z" fill="none" stroke="#8a2c3a" stroke-width="0.9"/><circle cx="20.0" cy="190.60000000000002" r="4.3" fill="none" stroke="#a83040" stroke-width="0.9"/><path d="M9.0 206.10000000000002L21.0 190.10000000000002" stroke="#a8a8a8" stroke-width=".8" stroke-dasharray="2 1.5"/><path d="M19.0 193.10000000000002L22.0 187.10000000000002" stroke="#90d080" stroke-width="1.2"/><rect x="7.0" y="206.10000000000002" width="3" height="3" fill="none" stroke="#90d080" stroke-width=".9"/><path d="M35.5 207.10000000000002L37.0 197.10000000000002Q38.5 183.10000000000002 47.5 183.10000000000002Q57.5 183.10000000000002 58.0 199.10000000000002V207.10000000000002Z" fill="none" stroke="#8a2c3a" stroke-width="0.9"/><circle cx="47.5" cy="190.60000000000002" r="4.3" fill="none" stroke="#a83040" stroke-width="0.9"/><path d="M36.5 206.10000000000002L48.5 190.10000000000002" stroke="#a8a8a8" stroke-width=".8" stroke-dasharray="2 1.5"/><path d="M46.5 193.10000000000002L49.5 187.10000000000002" stroke="#90d080" stroke-width="1.2"/><rect x="34.5" y="206.10000000000002" width="3" height="3" fill="none" stroke="#90d080" stroke-width=".9"/><path d="M72 30H93V27H118V30H138Q146 30 146 38V71Q146 79 138 79H118V82H93V79H72Q64 79 64 71V38Q64 30 72 30Z" fill="none" stroke="#8a2c3a" stroke-width="0.9"/><path d="M70 22H140" stroke="#2a1016" stroke-width="1"/><path d="M72 87H93V84H118V87H138Q146 87 146 95V128Q146 136 138 136H118V139H93V136H72Q64 136 64 128V95Q64 87 72 87Z" fill="none" stroke="#8a2c3a" stroke-width="0.9"/><path d="M70 79H140" stroke="#2a1016" stroke-width="1"/><path d="M72 150H93V147H118V150H138Q146 150 146 158V193Q146 201 138 201H118V204H93V201H72Q64 201 64 193V158Q64 150 72 150Z" fill="none" stroke="#8a2c3a" stroke-width="0.9"/><path d="M70 142H140" stroke="#2a1016" stroke-width="1"/><rect x="151" y="17" width="31" height="19" rx="3" fill="none" stroke="#8a2c3a" stroke-width="0.9"/><path d="M156 29L177 23M159 22L174 31" stroke="#a8a8a8" stroke-width=".7" stroke-dasharray="2 1"/><path d="M155 22h4M173 22h4M155 31h4M173 31h4" stroke="#e07070" stroke-width="1"/><rect x="186" y="17" width="31" height="19" rx="3" fill="none" stroke="#8a2c3a" stroke-width="0.9"/><path d="M191 29L212 23M194 22L209 31" stroke="#a8a8a8" stroke-width=".7" stroke-dasharray="2 1"/><path d="M190 22h4M208 22h4M190 31h4M208 31h4" stroke="#e07070" stroke-width="1"/><rect x="151" y="38" width="31" height="19" rx="3" fill="none" stroke="#8a2c3a" stroke-width="0.9"/><path d="M156 50L177 44M159 43L174 52" stroke="#a8a8a8" stroke-width=".7" stroke-dasharray="2 1"/><path d="M155 43h4M173 43h4M155 52h4M173 52h4" stroke="#e07070" stroke-width="1"/><rect x="186" y="38" width="31" height="19" rx="3" fill="none" stroke="#8a2c3a" stroke-width="0.9"/><path d="M191 50L212 44M194 43L209 52" stroke="#a8a8a8" stroke-width=".7" stroke-dasharray="2 1"/><path d="M190 43h4M208 43h4M190 52h4M208 52h4" stroke="#e07070" stroke-width="1"/><rect x="151" y="59" width="31" height="19" rx="3" fill="none" stroke="#8a2c3a" stroke-width="0.9"/><path d="M156 71L177 65M159 64L174 73" stroke="#a8a8a8" stroke-width=".7" stroke-dasharray="2 1"/><path d="M155 64h4M173 64h4M155 73h4M173 73h4" stroke="#e07070" stroke-width="1"/><rect x="186" y="59" width="31" height="19" rx="3" fill="none" stroke="#8a2c3a" stroke-width="0.9"/><path d="M191 71L212 65M194 64L209 73" stroke="#a8a8a8" stroke-width=".7" stroke-dasharray="2 1"/><path d="M190 64h4M208 64h4M190 73h4M208 73h4" stroke="#e07070" stroke-width="1"/><rect x="151.5" y="80" width="56" height="61" fill="none" stroke="#8a2c3a" stroke-width="0.9"/><path d="M153 84L207 137M158 84L207 129" stroke="#a03040" stroke-width="0.9"/><circle cx="193" cy="95" r="4.5" fill="none" stroke="#a03040"/><circle cx="169" cy="125" r="4.5" fill="none" stroke="#a03040"/><path d="M153 88L207 137L169 125M153 88L193 95L207 137" stroke="#a8a8a8" stroke-width=".7" stroke-dasharray="2 1.5" fill="none"/><rect x="151.5" y="141" width="56" height="65" fill="none" stroke="#8a2c3a" stroke-width="0.9"/><path d="M153 145L207 202M158 145L207 194" stroke="#a03040" stroke-width="0.9"/><circle cx="193" cy="156" r="4.5" fill="none" stroke="#a03040"/><circle cx="169" cy="190" r="4.5" fill="none" stroke="#a03040"/><path d="M153 149L207 202L169 190M153 149L193 156L207 202" stroke="#a8a8a8" stroke-width=".7" stroke-dasharray="2 1.5" fill="none"/><path d="M130 0L176 28" stroke="#c0c0c0" stroke-width="1.2"/><path d="M92.7 84L151.5 169.6M49 72.6L91 206M92.7 84V97M92.7 128V145M92.7 173V206M8 205L16 180M35 25L14 60" stroke="#a8a8a8" stroke-width=".8" stroke-dasharray="2 1.5" fill="none"/><rect x="91" y="82" width="3" height="3" fill="none" stroke="#90d080" stroke-width=".9"/><rect x="91" y="143" width="3" height="3" fill="none" stroke="#90d080" stroke-width=".9"/><path d="M3.5 0V207H220" stroke="#909090" stroke-width="1" fill="none"/></svg>
<div class="a" style="left:311px;top:526px;width:220px;height:15px;background:#f0f0f0;border-top:1px solid #d0d0d0"></div>
<div class="a" style="left:333px;top:527px;width:1px;height:13px;background:#d8d8d8"></div>
<div class="a t" style="left:313px;top:530px;font-size:8px;color:#333">797.1</div>
<div class="a t" style="left:414px;top:530px;font-size:8px;color:#222">Repeat 0mm</div>
<div class="a" style="left:531px;top:127px;width:472px;height:568px;background:#789ed2;border-top:1px solid #5f86bb"></div>
<div class="a" style="left:537px;top:131px;width:11px;height:11px;background:#d84a3a;border:1px solid #f0b0a0"></div>
<div class="a t" style="left:539px;top:132px;font-size:9px;font-weight:bold;color:#fff">K</div>
<div class="a t" style="left:634px;top:133px;font-size:8.8px;color:#34466a">PNC-CAM [C:\KAPPNC\DATA\PARTS\] Portable NC Ver4.23 Level1</div>
<div class="a" style="left:946px;top:135px;width:8px;height:2px;background:#2a3a5a"></div>
<div class="a" style="left:961px;top:131px;width:9px;height:7px;border:2px solid #2a3a5a"></div>
<div class="a" style="left:973px;top:128px;width:27px;height:12px;background:#c9504a"></div>
<svg class="a" style="left:982px;top:130px;" width="9" height="8" viewBox="0 0 9 8"><path d="M1 1L8 7M8 1L1 7" stroke="#fff" stroke-width="1.6"/></svg>
<div class="a" style="left:535px;top:146px;width:463px;height:545px;background:#f2f3f5"></div>
<div class="a" style="left:998px;top:146px;width:1px;height:545px;background:#9ab4d8"></div>
<div class="a" style="left:535px;top:146px;width:462px;height:12px;background:#f7f8fa"></div>
<div class="mi" style="left:540px;top:148px">File(F)</div>
<div class="mi" style="left:568px;top:148px">Create(M)</div>
<div class="mi" style="left:608px;top:148px">Setting(S)</div>
<div class="mi" style="left:648px;top:148px">Screen(W)</div>
<div class="mi" style="left:692px;top:148px">Nesting(N)</div>
<div class="mi" style="left:735px;top:148px">NC(P)</div>
<div class="mi" style="left:765px;top:148px">Information(I)</div>
<div class="mi" style="left:818px;top:148px">Option(O)</div>
<div class="mi" style="left:858px;top:148px">Database(D)</div>
<div class="a" style="left:536px;top:341px;width:337px;height:284px;background:#000"></div>
<div class="a msg" style="left:536px;top:626px;width:325px;height:50px;padding:3px 0 0 2px">Q'ty Exec.:SheetData [Start]
Q'ty Exec.:SheetData [Complete]
Q'ty Exec. [0]
Creating : NC Data [C:\KAPPNC\DATA\NESTDATA\130002-01]
Select next operation</div>
<div class="a" style="left:535px;top:158px;width:462px;height:21px;background:#f0f0f2"></div>
<div class="a" style="left:535px;top:179px;width:462px;height:1px;background:#a8a8a8"></div>
<div class="a" style="left:535px;top:158px;width:462px;height:1px;background:#c8c8c8"></div>
<svg class="a" style="left:537px;top:161px;" width="15" height="15" viewBox="0 0 15 15"><path d="M1 1H10L14 4V14H1Z" fill="#f4f4f4" stroke="#aaa"/><path d="M3 4H10M3 6H11" stroke="#bbb"/><text x="1.5" y="12.5" font-size="5.5" font-family="Liberation Sans" fill="#999">NEW</text></svg>
<svg class="a" style="left:556px;top:161px;" width="15" height="15" viewBox="0 0 15 15"><path d="M4 1H11L13 3V6H4Z" fill="#e4e4e4" stroke="#b4b4b4" stroke-width=".8"/><path d="M1 6H14V14H1Z" fill="#a8a8a8"/><rect x="3" y="8" width="9" height="3" fill="#c8c8c8"/></svg>
<svg class="a" style="left:575px;top:161px;" width="15" height="15" viewBox="0 0 15 15"><path d="M5 1H13L11 5H3Z" fill="#fff" stroke="#222" stroke-width=".9"/><path d="M1 6H15V12H1Z" fill="#2a2a2a"/><rect x="3" y="8" width="9" height="2.5" fill="#a89070"/><rect x="1" y="12" width="14" height="2" fill="#666"/></svg>
<div class="a" style="left:598px;top:159px;width:19px;height:19px;background:#c4daf2;border:1px solid #a8c4e6"></div>
<div class="a t" style="left:600px;top:164px;font-size:8px;font-weight:bold;color:#1a1a3a;letter-spacing:-0.3px">Free</div>
<svg class="a" style="left:622px;top:161px;" width="12" height="15" viewBox="0 0 12 15"><path d="M4 3V14" stroke="#111" stroke-width="2"/><path d="M7 5H11" stroke="#111" stroke-width="2"/><path d="M1 5L4 1L7 5Z" fill="#c01a1a"/></svg>
<svg class="a" style="left:639px;top:161px;" width="14" height="15" viewBox="0 0 14 15"><path d="M1 14L13 2" stroke="#111" stroke-width="2"/><circle cx="7" cy="8" r="2" fill="#d01a1a"/></svg>
<svg class="a" style="left:662px;top:165px;" width="6" height="6" viewBox="0 0 6 6"><circle cx="3" cy="3" r="2.3" fill="#d02030"/></svg>
<div class="a" style="left:673px;top:159px;width:19px;height:19px;background:#c4daf2;border:1px solid #a8c4e6"></div>
<svg class="a" style="left:675px;top:161px;" width="15" height="15" viewBox="0 0 15 15"><path d="M2 1L2 13L5 10L8 14L10 13L7 9H11Z" fill="#1a2a9a"/><rect x="8" y="8" width="6" height="6" fill="#e8e040"/></svg>
<div class="a" style="left:694px;top:160px;width:1px;height:17px;background:#a0a0a0"></div>
<div class="a" style="left:697px;top:159px;width:19px;height:20px;background:#c4daf2;border:1px solid #a4c0e4"></div>
<svg class="a" style="left:699px;top:161px;" width="15" height="16" viewBox="0 0 15 16"><path d="M0 9H15V16H1L0 14Z" fill="#111"/><rect x="2" y="11" width="12" height="4" fill="#ecec40"/><path d="M2 9.5H14" stroke="#8a8a40" stroke-width="1"/><path d="M3 1H10V5H12.5L8.5 8.5L4.5 5H7V3.5H3Z" fill="#6a1414"/></svg>
<svg class="a" style="left:719px;top:161px;" width="15" height="16" viewBox="0 0 15 16"><path d="M0 9H15V16H1L0 14Z" fill="#111"/><rect x="2" y="11" width="12" height="4" fill="#ecec40"/><path d="M2 9.5H14" stroke="#8a8a40" stroke-width="1"/><path d="M4 8V3H9V0.5L13 4L9 7.5V5.5H6.5V8Z" fill="#6a1414"/></svg>
<svg class="a" style="left:737px;top:161px;" width="15" height="16" viewBox="0 0 15 16"><path d="M0 9H15V16H1L0 14Z" fill="#111"/><rect x="2" y="11" width="12" height="4" fill="#ecec40"/><path d="M2 9.5H14" stroke="#8a8a40" stroke-width="1"/><text x="0" y="7.5" font-size="8" font-weight="bold" font-family="Liberation Sans" fill="#6a1414" textLength="15" lengthAdjust="spacingAndGlyphs">ALL</text></svg>
<svg class="a" style="left:757px;top:161px;" width="15" height="16" viewBox="0 0 15 16"><path d="M0 9H15V16H1L0 14Z" fill="#111"/><rect x="2" y="11" width="12" height="4" fill="#ecec40"/><path d="M2 9.5H14" stroke="#8a8a40" stroke-width="1"/><path d="M1 3.5H8M3.5 1L1 3.5L3.5 6M7 7H14M11.5 4.5L14 7L11.5 9.5" stroke="#6a1414" stroke-width="2" fill="none"/></svg>
<svg class="a" style="left:776px;top:161px;" width="15" height="16" viewBox="0 0 15 16"><path d="M0 9H15V16H1L0 14Z" fill="#111"/><rect x="2" y="11" width="12" height="4" fill="#ecec40"/><path d="M2 9.5H14" stroke="#8a8a40" stroke-width="1"/><text x="0" y="7.5" font-size="7" font-weight="bold" font-family="Liberation Sans" fill="#6a1414" textLength="15" lengthAdjust="spacingAndGlyphs">Prev</text></svg>
<div class="a" style="left:796px;top:160px;width:1px;height:17px;background:#a0a0a0"></div>
<svg class="a" style="left:801px;top:161px;" width="16" height="16" viewBox="0 0 16 16"><circle cx="6.5" cy="6.5" r="5.5" fill="#7ac8b8" stroke="#1a4a4a" stroke-width="1.5"/><rect x="4" y="2.5" width="5" height="7" fill="#fff" stroke="#222" stroke-width=".8"/><path d="M10 10L14.5 14.5" stroke="#1a2a6a" stroke-width="2.5"/></svg>
<svg class="a" style="left:820px;top:161px;" width="16" height="16" viewBox="0 0 16 16"><circle cx="6.5" cy="6.5" r="5.5" fill="#7ac8b8" stroke="#1a4a4a" stroke-width="1.5"/><rect x="4" y="3" width="2" height="7" fill="#2a4a2a"/><rect x="7" y="3" width="2" height="7" fill="#2a4a2a"/><path d="M10 10L14.5 14.5" stroke="#1a2a6a" stroke-width="2.5"/></svg>
<svg class="a" style="left:839px;top:161px;" width="16" height="16" viewBox="0 0 16 16"><circle cx="6.5" cy="6.5" r="5.5" fill="#7ac8b8" stroke="#1a4a4a" stroke-width="1.5"/><path d="M4 4L9 9M9 4L4 9" stroke="#1a1a1a" stroke-width="1.5"/><path d="M10 10L14.5 14.5" stroke="#1a2a6a" stroke-width="2.5"/></svg>
<svg class="a" style="left:858px;top:161px;" width="16" height="16" viewBox="0 0 16 16"><circle cx="6.5" cy="6.5" r="5.5" fill="#7ac8b8" stroke="#1a4a4a" stroke-width="1.5"/><path d="M6.5 2.5V10.5M2.5 6.5H10.5" stroke="#1a3a5a" stroke-width="1.2"/><path d="M10 10L14.5 14.5" stroke="#1a2a6a" stroke-width="2.5"/></svg>
<div class="a" style="left:877px;top:160px;width:1px;height:17px;background:#a0a0a0"></div>
<svg class="a" style="left:883px;top:161px;" width="15" height="15" viewBox="0 0 15 15"><circle cx="7.5" cy="7.5" r="6.5" fill="#2a4ab0" stroke="#d4dcf0"/><text x="4.5" y="11" font-size="9" font-weight="bold" font-family="Liberation Sans" fill="#fff">?</text></svg>
<svg class="a" style="left:901px;top:162px;" width="15" height="14" viewBox="0 0 15 14"><path d="M1 7L14 1V13Z" fill="#a8a8a8"/></svg>
<svg class="a" style="left:921px;top:162px;" width="15" height="14" viewBox="0 0 15 14"><path d="M14 7L1 1V13Z" fill="#a8a8a8"/></svg>
<div class="a" style="left:939px;top:160px;width:1px;height:17px;background:#a0a0a0"></div>
<svg class="a" style="left:537px;top:183px;" width="16" height="15" viewBox="0 0 16 15"><text x="0" y="7" font-size="8" font-weight="bold" font-family="Liberation Sans" fill="#1a1a5a">M</text><rect x="7" y="3" width="8" height="2.5" fill="#7ac8d8"/><path d="M1 9H15M1 11.5H15M1 14H15M15 5V15" stroke="#111" stroke-width="1.2"/></svg>
<svg class="a" style="left:556px;top:183px;" width="16" height="15" viewBox="0 0 16 15"><text x="0" y="7" font-size="8" font-weight="bold" font-family="Liberation Sans" fill="#1a1a5a">T</text><rect x="7" y="3" width="8" height="2.5" fill="#3a7a3a"/><rect x="3" y="7" width="12" height="8" fill="#e8e860"/><path d="M3 9H15M3 11.5H15M3 14H15M3 6V15M15 5V15" stroke="#111" stroke-width="1"/></svg>
<svg class="a" style="left:575px;top:183px;" width="16" height="15" viewBox="0 0 16 15"><path d="M0 4L4 0V2.5H12V0L16 4L12 8V5.5H4V8Z" fill="#1a2a8a"/><rect x="1" y="8" width="14" height="7" fill="#e8e860"/><path d="M5 10V13M7.5 10V13M10 10V13" stroke="#222"/></svg>
<svg class="a" style="left:594px;top:183px;" width="16" height="15" viewBox="0 0 16 15"><rect x="0.5" y="1.5" width="14" height="13" fill="#fff" stroke="#777" stroke-width=".8"/><text x="1.5" y="10" font-size="7" font-weight="bold" font-family="Liberation Sans" fill="#111">Esc</text></svg>
<div class="a" style="left:535px;top:202px;width:462px;height:1px;background:#a8a8a8"></div>
<div class="a" style="left:538px;top:200px;width:459px;height:137px;background:#fff;border:1px solid #a8a8a8"></div>
<div class="a" style="left:539px;top:314px;width:447px;height:13px;background:#ececec"></div>
<div class="a" style="left:539px;top:215px;width:447px;height:1px;background:#e6e6e6"></div>
<div class="a" style="left:539px;top:227px;width:447px;height:1px;background:#e6e6e6"></div>
<div class="a" style="left:539px;top:240px;width:447px;height:1px;background:#e6e6e6"></div>
<div class="a" style="left:539px;top:252px;width:447px;height:1px;background:#e6e6e6"></div>
<div class="a" style="left:539px;top:264px;width:447px;height:1px;background:#e6e6e6"></div>
<div class="a" style="left:539px;top:277px;width:447px;height:1px;background:#e6e6e6"></div>
<div class="a" style="left:539px;top:289px;width:447px;height:1px;background:#e6e6e6"></div>
<div class="a" style="left:539px;top:301px;width:447px;height:1px;background:#e6e6e6"></div>
<div class="a" style="left:539px;top:314px;width:447px;height:1px;background:#e6e6e6"></div>
<div class="a" style="left:539px;top:326px;width:447px;height:1px;background:#e6e6e6"></div>
<div class="a" style="left:539px;top:338px;width:447px;height:1px;background:#e6e6e6"></div>
<div class="a" style="left:579px;top:201px;width:1px;height:135px;background:#e2e2e2"></div>
<div class="a" style="left:849px;top:201px;width:1px;height:135px;background:#e2e2e2"></div>
<div class="a" style="left:925px;top:201px;width:1px;height:135px;background:#e2e2e2"></div>
<div class="a" style="left:949px;top:201px;width:1px;height:135px;background:#e2e2e2"></div>
<div class="a" style="left:986px;top:201px;width:1px;height:135px;background:#e2e2e2"></div>
<div class="a" style="left:900px;top:201px;width:1px;height:14px;background:#e2e2e2"></div>
<div class="a t" style="left:542px;top:204px;font-family:'Liberation Mono';font-size:8px;color:#5a5a5a">No</div>
<div class="a t" style="left:583px;top:204px;font-family:'Liberation Mono';font-size:8px;color:#5a5a5a">C:\KAPPNC\DATA\NESTDATA\130002-01.nc</div>
<div class="a t" style="left:829px;top:204px;font-family:'Liberation Mono';font-size:8px;color:#5a5a5a">G0</div>
<div class="a t" style="left:854px;top:204px;font-family:'Liberation Mono';font-size:8px;color:#5a5a5a">Length</div>
<div class="a t" style="left:904px;top:204px;font-family:'Liberation Mono';font-size:8px;color:#5a5a5a">G1</div>
<div class="a t" style="left:929px;top:204px;font-family:'Liberation Mono';font-size:8px;color:#5a5a5a">D</div>
<div class="a t" style="left:953px;top:204px;font-family:'Liberation Mono';font-size:8px;color:#5a5a5a">Mor...</div>
<div class="a" style="left:542px;top:219px;width:7px;height:8px;border-top:1px solid #333;border-right:1px solid #333"></div>
<div class="a t" style="left:554px;top:218px;font-family:'Liberation Mono';font-size:8px;color:#5a5a5a">0055</div>
<div class="a t" style="left:583px;top:218px;font-family:'Liberation Mono';font-size:8px;color:#5a5a5a">G02X7.067YD.2321J.650-3.418</div>
<div class="a t" style="left:829px;top:218px;font-family:'Liberation Mono';font-size:8px;color:#5a5a5a">02</div>
<div class="a t" style="left:854px;top:218px;font-family:'Liberation Mono';font-size:8px;color:#5a5a5a">7.854</div>
<div class="a t" style="left:904px;top:218px;font-family:'Liberation Mono';font-size:8px;color:#5a5a5a">42</div>
<div class="a t" style="left:929px;top:218px;font-family:'Liberation Mono';font-size:8px;color:#5a5a5a">00</div>
<div class="a" style="left:542px;top:231px;width:7px;height:8px;border-top:1px solid #333;border-right:1px solid #333"></div>
<div class="a t" style="left:554px;top:230px;font-family:'Liberation Mono';font-size:8px;color:#5a5a5a">0056</div>
<div class="a t" style="left:583px;top:230px;font-family:'Liberation Mono';font-size:8px;color:#5a5a5a">G02X 94.177Y 36.496I 17.088J 18.248</div>
<div class="a t" style="left:829px;top:230px;font-family:'Liberation Mono';font-size:8px;color:#5a5a5a">02</div>
<div class="a t" style="left:854px;top:230px;font-family:'Liberation Mono';font-size:8px;color:#5a5a5a">78.540</div>
<div class="a t" style="left:904px;top:230px;font-family:'Liberation Mono';font-size:8px;color:#5a5a5a">42</div>
<div class="a t" style="left:929px;top:230px;font-family:'Liberation Mono';font-size:8px;color:#5a5a5a">00</div>
<div class="a" style="left:542px;top:243px;width:7px;height:8px;border-top:1px solid #333;border-right:1px solid #333"></div>
<div class="a t" style="left:554px;top:242px;font-family:'Liberation Mono';font-size:8px;color:#5a5a5a">0057</div>
<div class="a t" style="left:583px;top:242px;font-family:'Liberation Mono';font-size:8px;color:#5a5a5a">G03X94.177Y36.496I17.088J18.248</div>
<div class="a t" style="left:829px;top:242px;font-family:'Liberation Mono';font-size:8px;color:#5a5a5a">02</div>
<div class="a t" style="left:854px;top:242px;font-family:'Liberation Mono';font-size:8px;color:#5a5a5a">78.540</div>
<div class="a t" style="left:904px;top:242px;font-family:'Liberation Mono';font-size:8px;color:#5a5a5a">42</div>
<div class="a t" style="left:929px;top:242px;font-family:'Liberation Mono';font-size:8px;color:#5a5a5a">00</div>
<div class="a" style="left:542px;top:256px;width:7px;height:8px;border-top:1px solid #333;border-right:1px solid #333"></div>
<div class="a t" style="left:554px;top:255px;font-family:'Liberation Mono';font-size:8px;color:#5a5a5a">0058</div>
<div class="a t" style="left:583px;top:255px;font-family:'Liberation Mono';font-size:8px;color:#5a5a5a">G02X0.292Y-7.007I-0.418J-3.01</div>
<div class="a t" style="left:829px;top:255px;font-family:'Liberation Mono';font-size:8px;color:#5a5a5a">02</div>
<div class="a t" style="left:854px;top:255px;font-family:'Liberation Mono';font-size:8px;color:#5a5a5a">7.854</div>
<div class="a t" style="left:904px;top:255px;font-family:'Liberation Mono';font-size:8px;color:#5a5a5a">42</div>
<div class="a t" style="left:929px;top:255px;font-family:'Liberation Mono';font-size:8px;color:#5a5a5a">00</div>
<div class="a" style="left:542px;top:268px;width:7px;height:8px;border-top:1px solid #333;border-right:1px solid #333"></div>
<div class="a t" style="left:554px;top:267px;font-family:'Liberation Mono';font-size:8px;color:#5a5a5a">0059</div>
<div class="a t" style="left:583px;top:267px;font-family:'Liberation Mono';font-size:8px;color:#5a5a5a">G01X 1.367Y 1.46</div>
<div class="a t" style="left:829px;top:267px;font-family:'Liberation Mono';font-size:8px;color:#5a5a5a">01</div>
<div class="a t" style="left:854px;top:267px;font-family:'Liberation Mono';font-size:8px;color:#5a5a5a">2.000</div>
<div class="a t" style="left:904px;top:267px;font-family:'Liberation Mono';font-size:8px;color:#5a5a5a">42</div>
<div class="a t" style="left:929px;top:267px;font-family:'Liberation Mono';font-size:8px;color:#5a5a5a">00</div>
<div class="a" style="left:542px;top:280px;width:7px;height:8px;border-top:1px solid #333;border-right:1px solid #333"></div>
<div class="a t" style="left:554px;top:279px;font-family:'Liberation Mono';font-size:8px;color:#5a5a5a">0060</div>
<div class="a t" style="left:583px;top:279px;font-family:'Liberation Mono';font-size:8px;color:#5a5a5a">X08</div>
<div class="a" style="left:542px;top:293px;width:7px;height:8px;border-top:1px solid #333;border-right:1px solid #333"></div>
<div class="a t" style="left:554px;top:292px;font-family:'Liberation Mono';font-size:8px;color:#5a5a5a">0061</div>
<div class="a t" style="left:583px;top:292px;font-family:'Liberation Mono';font-size:8px;color:#5a5a5a">G40</div>
<div class="a" style="left:542px;top:305px;width:7px;height:8px;border-top:1px solid #333;border-right:1px solid #333"></div>
<div class="a t" style="left:554px;top:304px;font-family:'Liberation Mono';font-size:8px;color:#5a5a5a">0062</div>
<div class="a t" style="left:583px;top:304px;font-family:'Liberation Mono';font-size:8px;color:#5a5a5a">X15000X 85.955Y 114.721</div>
<div class="a t" style="left:829px;top:304px;font-family:'Liberation Mono';font-size:8px;color:#5a5a5a">00</div>
<div class="a t" style="left:854px;top:304px;font-family:'Liberation Mono';font-size:8px;color:#5a5a5a">148.340</div>
<div class="a" style="left:542px;top:317px;width:7px;height:8px;border-top:1px solid #333;border-right:1px solid #333"></div>
<div class="a t" style="left:554px;top:316px;font-family:'Liberation Mono';font-size:8px;color:#5a5a5a">0063</div>
<div class="a t" style="left:583px;top:316px;font-family:'Liberation Mono';font-size:8px;color:#5a5a5a">G41</div>
<div class="a" style="left:542px;top:330px;width:7px;height:8px;border-top:1px solid #333;border-right:1px solid #333"></div>
<div class="a t" style="left:554px;top:329px;font-family:'Liberation Mono';font-size:8px;color:#5a5a5a">0064</div>
<div class="a t" style="left:583px;top:329px;font-family:'Liberation Mono';font-size:8px;color:#5a5a5a">X07</div>
<div class="a" style="left:989px;top:201px;width:8px;height:135px;background:#f0f0f0"></div>
<div class="a" style="left:990px;top:217px;width:7px;height:10px;background:#c8c8c8"></div>
<svg class="a" style="left:989px;top:205px;" width="8" height="5" viewBox="0 0 8 5"><path d="M1 4L4 1L7 4" stroke="#333" stroke-width="1.3" fill="none"/></svg>
<svg class="a" style="left:989px;top:329px;" width="8" height="5" viewBox="0 0 8 5"><path d="M1 1L4 4L7 1" stroke="#333" stroke-width="1.3" fill="none"/></svg>
<div class="a" style="left:535px;top:337px;width:462px;height:4px;background:#eef2f6"></div>
<svg class="a" style="left:536px;top:341px;" width="337" height="284" viewBox="0 0 337 284"><path d="M72.0 41.5H86.0Q95.0 42.5 99.0 49.5Q102.0 55.0 99.0 60.5Q95.0 67.0 86.0 68.0H72.0Z" fill="none" stroke="#70262e" stroke-width="1"/><circle cx="92.0" cy="55.0" r="6.5" fill="none" stroke="#6a2630"/><path d="M73.0 42.5L92.0 55.5M79.0 42.5L92.0 51.5M91.0 56.5L80.0 68.0" stroke="#b4b4b4" stroke-width=".7" stroke-dasharray="1.5 1.5" fill="none"/><rect x="90.5" y="53.5" width="3" height="3" fill="#b8e8e0"/><rect x="71.0" y="40.5" width="2.2" height="2.2" fill="#f0f0f0"/><rect x="77.0" y="40.5" width="2.2" height="2.2" fill="#f0f0f0"/><rect x="93.0" y="43.5" width="2.2" height="2.2" fill="#f0f0f0"/><rect x="71.0" y="67.0" width="2.2" height="2.2" fill="#f0f0f0"/><rect x="77.0" y="67.0" width="2.2" height="2.2" fill="#f0f0f0"/><rect x="93.0" y="64.0" width="2.2" height="2.2" fill="#f0f0f0"/><rect x="85.0" y="48.5" width="2.2" height="2.2" fill="#f0f0f0"/><path d="M105.4 41.5H119.4Q128.4 42.5 132.4 49.5Q135.4 55.0 132.4 60.5Q128.4 67.0 119.4 68.0H105.4Z" fill="none" stroke="#70262e" stroke-width="1"/><circle cx="125.4" cy="55.0" r="6.5" fill="none" stroke="#6a2630"/><path d="M106.4 42.5L125.4 55.5M112.4 42.5L125.4 51.5M124.4 56.5L113.4 68.0" stroke="#b4b4b4" stroke-width=".7" stroke-dasharray="1.5 1.5" fill="none"/><rect x="123.9" y="53.5" width="3" height="3" fill="#b8e8e0"/><rect x="104.4" y="40.5" width="2.2" height="2.2" fill="#f0f0f0"/><rect x="110.4" y="40.5" width="2.2" height="2.2" fill="#f0f0f0"/><rect x="126.4" y="43.5" width="2.2" height="2.2" fill="#f0f0f0"/><rect x="104.4" y="67.0" width="2.2" height="2.2" fill="#f0f0f0"/><rect x="110.4" y="67.0" width="2.2" height="2.2" fill="#f0f0f0"/><rect x="126.4" y="64.0" width="2.2" height="2.2" fill="#f0f0f0"/><rect x="118.4" y="48.5" width="2.2" height="2.2" fill="#f0f0f0"/><path d="M138.8 41.5H152.8Q161.8 42.5 165.8 49.5Q168.8 55.0 165.8 60.5Q161.8 67.0 152.8 68.0H138.8Z" fill="none" stroke="#70262e" stroke-width="1"/><circle cx="158.8" cy="55.0" r="6.5" fill="none" stroke="#6a2630"/><path d="M139.8 42.5L158.8 55.5M145.8 42.5L158.8 51.5M157.8 56.5L146.8 68.0" stroke="#b4b4b4" stroke-width=".7" stroke-dasharray="1.5 1.5" fill="none"/><rect x="157.3" y="53.5" width="3" height="3" fill="#b8e8e0"/><rect x="137.8" y="40.5" width="2.2" height="2.2" fill="#f0f0f0"/><rect x="143.8" y="40.5" width="2.2" height="2.2" fill="#f0f0f0"/><rect x="159.8" y="43.5" width="2.2" height="2.2" fill="#f0f0f0"/><rect x="137.8" y="67.0" width="2.2" height="2.2" fill="#f0f0f0"/><rect x="143.8" y="67.0" width="2.2" height="2.2" fill="#f0f0f0"/><rect x="159.8" y="64.0" width="2.2" height="2.2" fill="#f0f0f0"/><rect x="151.8" y="48.5" width="2.2" height="2.2" fill="#f0f0f0"/><path d="M172.2 41.5H186.2Q195.2 42.5 199.2 49.5Q202.2 55.0 199.2 60.5Q195.2 67.0 186.2 68.0H172.2Z" fill="none" stroke="#70262e" stroke-width="1"/><circle cx="192.2" cy="55.0" r="6.5" fill="none" stroke="#6a2630"/><path d="M173.2 42.5L192.2 55.5M179.2 42.5L192.2 51.5M191.2 56.5L180.2 68.0" stroke="#b4b4b4" stroke-width=".7" stroke-dasharray="1.5 1.5" fill="none"/><rect x="190.7" y="53.5" width="3" height="3" fill="#b8e8e0"/><rect x="171.2" y="40.5" width="2.2" height="2.2" fill="#f0f0f0"/><rect x="177.2" y="40.5" width="2.2" height="2.2" fill="#f0f0f0"/><rect x="193.2" y="43.5" width="2.2" height="2.2" fill="#f0f0f0"/><rect x="171.2" y="67.0" width="2.2" height="2.2" fill="#f0f0f0"/><rect x="177.2" y="67.0" width="2.2" height="2.2" fill="#f0f0f0"/><rect x="193.2" y="64.0" width="2.2" height="2.2" fill="#f0f0f0"/><rect x="185.2" y="48.5" width="2.2" height="2.2" fill="#f0f0f0"/><path d="M205.6 41.5H219.6Q228.6 42.5 232.6 49.5Q235.6 55.0 232.6 60.5Q228.6 67.0 219.6 68.0H205.6Z" fill="none" stroke="#70262e" stroke-width="1"/><circle cx="225.6" cy="55.0" r="6.5" fill="none" stroke="#6a2630"/><path d="M206.6 42.5L225.6 55.5M212.6 42.5L225.6 51.5M224.6 56.5L213.6 68.0" stroke="#b4b4b4" stroke-width=".7" stroke-dasharray="1.5 1.5" fill="none"/><rect x="224.1" y="53.5" width="3" height="3" fill="#b8e8e0"/><rect x="204.6" y="40.5" width="2.2" height="2.2" fill="#f0f0f0"/><rect x="210.6" y="40.5" width="2.2" height="2.2" fill="#f0f0f0"/><rect x="226.6" y="43.5" width="2.2" height="2.2" fill="#f0f0f0"/><rect x="204.6" y="67.0" width="2.2" height="2.2" fill="#f0f0f0"/><rect x="210.6" y="67.0" width="2.2" height="2.2" fill="#f0f0f0"/><rect x="226.6" y="64.0" width="2.2" height="2.2" fill="#f0f0f0"/><rect x="218.6" y="48.5" width="2.2" height="2.2" fill="#f0f0f0"/><path d="M239.0 41.5H253.0Q262.0 42.5 266.0 49.5Q269.0 55.0 266.0 60.5Q262.0 67.0 253.0 68.0H239.0Z" fill="none" stroke="#70262e" stroke-width="1"/><circle cx="259.0" cy="55.0" r="6.5" fill="none" stroke="#6a2630"/><path d="M240.0 42.5L259.0 55.5M246.0 42.5L259.0 51.5M258.0 56.5L247.0 68.0" stroke="#b4b4b4" stroke-width=".7" stroke-dasharray="1.5 1.5" fill="none"/><rect x="257.5" y="53.5" width="3" height="3" fill="#b8e8e0"/><rect x="238.0" y="40.5" width="2.2" height="2.2" fill="#f0f0f0"/><rect x="244.0" y="40.5" width="2.2" height="2.2" fill="#f0f0f0"/><rect x="260.0" y="43.5" width="2.2" height="2.2" fill="#f0f0f0"/><rect x="238.0" y="67.0" width="2.2" height="2.2" fill="#f0f0f0"/><rect x="244.0" y="67.0" width="2.2" height="2.2" fill="#f0f0f0"/><rect x="260.0" y="64.0" width="2.2" height="2.2" fill="#f0f0f0"/><rect x="252.0" y="48.5" width="2.2" height="2.2" fill="#f0f0f0"/><path d="M272.4 41.5H286.4Q295.4 42.5 299.4 49.5Q302.4 55.0 299.4 60.5Q295.4 67.0 286.4 68.0H272.4Z" fill="none" stroke="#70262e" stroke-width="1"/><circle cx="292.4" cy="55.0" r="6.5" fill="none" stroke="#6a2630"/><path d="M273.4 42.5L292.4 55.5M279.4 42.5L292.4 51.5M291.4 56.5L280.4 68.0" stroke="#b4b4b4" stroke-width=".7" stroke-dasharray="1.5 1.5" fill="none"/><rect x="290.9" y="53.5" width="3" height="3" fill="#b8e8e0"/><rect x="271.4" y="40.5" width="2.2" height="2.2" fill="#f0f0f0"/><rect x="277.4" y="40.5" width="2.2" height="2.2" fill="#f0f0f0"/><rect x="293.4" y="43.5" width="2.2" height="2.2" fill="#f0f0f0"/><rect x="271.4" y="67.0" width="2.2" height="2.2" fill="#f0f0f0"/><rect x="277.4" y="67.0" width="2.2" height="2.2" fill="#f0f0f0"/><rect x="293.4" y="64.0" width="2.2" height="2.2" fill="#f0f0f0"/><rect x="285.4" y="48.5" width="2.2" height="2.2" fill="#f0f0f0"/><path d="M72.0 73H86.0Q95.0 74 99.0 81Q102.0 86.5 99.0 92Q95.0 98.5 86.0 99.5H72.0Z" fill="none" stroke="#70262e" stroke-width="1"/><circle cx="92.0" cy="86.5" r="6.5" fill="none" stroke="#6a2630"/><path d="M73.0 74L92.0 87M79.0 74L92.0 83M91.0 88L80.0 99.5" stroke="#b4b4b4" stroke-width=".7" stroke-dasharray="1.5 1.5" fill="none"/><rect x="90.5" y="85" width="3" height="3" fill="#b8e8e0"/><rect x="71.0" y="72" width="2.2" height="2.2" fill="#f0f0f0"/><rect x="77.0" y="72" width="2.2" height="2.2" fill="#f0f0f0"/><rect x="93.0" y="75" width="2.2" height="2.2" fill="#f0f0f0"/><rect x="71.0" y="98.5" width="2.2" height="2.2" fill="#f0f0f0"/><rect x="77.0" y="98.5" width="2.2" height="2.2" fill="#f0f0f0"/><rect x="93.0" y="95.5" width="2.2" height="2.2" fill="#f0f0f0"/><rect x="85.0" y="80" width="2.2" height="2.2" fill="#f0f0f0"/><path d="M105.4 73H119.4Q128.4 74 132.4 81Q135.4 86.5 132.4 92Q128.4 98.5 119.4 99.5H105.4Z" fill="none" stroke="#70262e" stroke-width="1"/><circle cx="125.4" cy="86.5" r="6.5" fill="none" stroke="#6a2630"/><path d="M106.4 74L125.4 87M112.4 74L125.4 83M124.4 88L113.4 99.5" stroke="#b4b4b4" stroke-width=".7" stroke-dasharray="1.5 1.5" fill="none"/><rect x="123.9" y="85" width="3" height="3" fill="#b8e8e0"/><rect x="104.4" y="72" width="2.2" height="2.2" fill="#f0f0f0"/><rect x="110.4" y="72" width="2.2" height="2.2" fill="#f0f0f0"/><rect x="126.4" y="75" width="2.2" height="2.2" fill="#f0f0f0"/><rect x="104.4" y="98.5" width="2.2" height="2.2" fill="#f0f0f0"/><rect x="110.4" y="98.5" width="2.2" height="2.2" fill="#f0f0f0"/><rect x="126.4" y="95.5" width="2.2" height="2.2" fill="#f0f0f0"/><rect x="118.4" y="80" width="2.2" height="2.2" fill="#f0f0f0"/><path d="M138.8 73H152.8Q161.8 74 165.8 81Q168.8 86.5 165.8 92Q161.8 98.5 152.8 99.5H138.8Z" fill="none" stroke="#70262e" stroke-width="1"/><circle cx="158.8" cy="86.5" r="6.5" fill="none" stroke="#6a2630"/><path d="M139.8 74L158.8 87M145.8 74L158.8 83M157.8 88L146.8 99.5" stroke="#b4b4b4" stroke-width=".7" stroke-dasharray="1.5 1.5" fill="none"/><rect x="157.3" y="85" width="3" height="3" fill="#b8e8e0"/><rect x="137.8" y="72" width="2.2" height="2.2" fill="#f0f0f0"/><rect x="143.8" y="72" width="2.2" height="2.2" fill="#f0f0f0"/><rect x="159.8" y="75" width="2.2" height="2.2" fill="#f0f0f0"/><rect x="137.8" y="98.5" width="2.2" height="2.2" fill="#f0f0f0"/><rect x="143.8" y="98.5" width="2.2" height="2.2" fill="#f0f0f0"/><rect x="159.8" y="95.5" width="2.2" height="2.2" fill="#f0f0f0"/><rect x="151.8" y="80" width="2.2" height="2.2" fill="#f0f0f0"/><path d="M172.2 73H186.2Q195.2 74 199.2 81Q202.2 86.5 199.2 92Q195.2 98.5 186.2 99.5H172.2Z" fill="none" stroke="#70262e" stroke-width="1"/><circle cx="192.2" cy="86.5" r="6.5" fill="none" stroke="#6a2630"/><path d="M173.2 74L192.2 87M179.2 74L192.2 83M191.2 88L180.2 99.5" stroke="#b4b4b4" stroke-width=".7" stroke-dasharray="1.5 1.5" fill="none"/><rect x="190.7" y="85" width="3" height="3" fill="#b8e8e0"/><rect x="171.2" y="72" width="2.2" height="2.2" fill="#f0f0f0"/><rect x="177.2" y="72" width="2.2" height="2.2" fill="#f0f0f0"/><rect x="193.2" y="75" width="2.2" height="2.2" fill="#f0f0f0"/><rect x="171.2" y="98.5" width="2.2" height="2.2" fill="#f0f0f0"/><rect x="177.2" y="98.5" width="2.2" height="2.2" fill="#f0f0f0"/><rect x="193.2" y="95.5" width="2.2" height="2.2" fill="#f0f0f0"/><rect x="185.2" y="80" width="2.2" height="2.2" fill="#f0f0f0"/><path d="M205.6 73H219.6Q228.6 74 232.6 81Q235.6 86.5 232.6 92Q228.6 98.5 219.6 99.5H205.6Z" fill="none" stroke="#70262e" stroke-width="1"/><circle cx="225.6" cy="86.5" r="6.5" fill="none" stroke="#6a2630"/><path d="M206.6 74L225.6 87M212.6 74L225.6 83M224.6 88L213.6 99.5" stroke="#b4b4b4" stroke-width=".7" stroke-dasharray="1.5 1.5" fill="none"/><rect x="224.1" y="85" width="3" height="3" fill="#b8e8e0"/><rect x="204.6" y="72" width="2.2" height="2.2" fill="#f0f0f0"/><rect x="210.6" y="72" width="2.2" height="2.2" fill="#f0f0f0"/><rect x="226.6" y="75" width="2.2" height="2.2" fill="#f0f0f0"/><rect x="204.6" y="98.5" width="2.2" height="2.2" fill="#f0f0f0"/><rect x="210.6" y="98.5" width="2.2" height="2.2" fill="#f0f0f0"/><rect x="226.6" y="95.5" width="2.2" height="2.2" fill="#f0f0f0"/><rect x="218.6" y="80" width="2.2" height="2.2" fill="#f0f0f0"/><path d="M239.0 73H253.0Q262.0 74 266.0 81Q269.0 86.5 266.0 92Q262.0 98.5 253.0 99.5H239.0Z" fill="none" stroke="#70262e" stroke-width="1"/><circle cx="259.0" cy="86.5" r="6.5" fill="none" stroke="#6a2630"/><path d="M240.0 74L259.0 87M246.0 74L259.0 83M258.0 88L247.0 99.5" stroke="#b4b4b4" stroke-width=".7" stroke-dasharray="1.5 1.5" fill="none"/><rect x="257.5" y="85" width="3" height="3" fill="#b8e8e0"/><rect x="238.0" y="72" width="2.2" height="2.2" fill="#f0f0f0"/><rect x="244.0" y="72" width="2.2" height="2.2" fill="#f0f0f0"/><rect x="260.0" y="75" width="2.2" height="2.2" fill="#f0f0f0"/><rect x="238.0" y="98.5" width="2.2" height="2.2" fill="#f0f0f0"/><rect x="244.0" y="98.5" width="2.2" height="2.2" fill="#f0f0f0"/><rect x="260.0" y="95.5" width="2.2" height="2.2" fill="#f0f0f0"/><rect x="252.0" y="80" width="2.2" height="2.2" fill="#f0f0f0"/><path d="M272.4 73H286.4Q295.4 74 299.4 81Q302.4 86.5 299.4 92Q295.4 98.5 286.4 99.5H272.4Z" fill="none" stroke="#70262e" stroke-width="1"/><circle cx="292.4" cy="86.5" r="6.5" fill="none" stroke="#6a2630"/><path d="M273.4 74L292.4 87M279.4 74L292.4 83M291.4 88L280.4 99.5" stroke="#b4b4b4" stroke-width=".7" stroke-dasharray="1.5 1.5" fill="none"/><rect x="290.9" y="85" width="3" height="3" fill="#b8e8e0"/><rect x="271.4" y="72" width="2.2" height="2.2" fill="#f0f0f0"/><rect x="277.4" y="72" width="2.2" height="2.2" fill="#f0f0f0"/><rect x="293.4" y="75" width="2.2" height="2.2" fill="#f0f0f0"/><rect x="271.4" y="98.5" width="2.2" height="2.2" fill="#f0f0f0"/><rect x="277.4" y="98.5" width="2.2" height="2.2" fill="#f0f0f0"/><rect x="293.4" y="95.5" width="2.2" height="2.2" fill="#f0f0f0"/><rect x="285.4" y="80" width="2.2" height="2.2" fill="#f0f0f0"/><ellipse cx="218" cy="44" rx="9" ry="4.5" fill="#78c858"/><rect x="137" y="39" width="5" height="5" fill="none" stroke="#80e0e0" stroke-width="1.2"/><rect x="157" y="53" width="6" height="6" fill="none" stroke="#fff" stroke-width="1.2"/><path d="M72.0 115.5Q106.0 105.5 140.0 115.5Q134.0 155.5 140.0 195.5Q106.0 205.5 72.0 195.5Q78.0 155.5 72.0 115.5Z" fill="none" stroke="#70262e" stroke-width="1"/><rect x="71.0" y="114.5" width="2.2" height="2.2" fill="#f0f0f0"/><rect x="139.0" y="114.5" width="2.2" height="2.2" fill="#f0f0f0"/><rect x="71.0" y="154.5" width="2.2" height="2.2" fill="#f0f0f0"/><rect x="139.0" y="154.5" width="2.2" height="2.2" fill="#f0f0f0"/><rect x="71.0" y="192.5" width="2.2" height="2.2" fill="#f0f0f0"/><rect x="139.0" y="192.5" width="2.2" height="2.2" fill="#f0f0f0"/><rect x="71.0" y="194.5" width="2.2" height="2.2" fill="#f0f0f0"/><rect x="139.0" y="194.5" width="2.2" height="2.2" fill="#f0f0f0"/><path d="M140.5 115.5Q174.5 105.5 208.5 115.5Q202.5 155.5 208.5 195.5Q174.5 205.5 140.5 195.5Q146.5 155.5 140.5 115.5Z" fill="none" stroke="#70262e" stroke-width="1"/><rect x="139.5" y="114.5" width="2.2" height="2.2" fill="#f0f0f0"/><rect x="207.5" y="114.5" width="2.2" height="2.2" fill="#f0f0f0"/><rect x="139.5" y="154.5" width="2.2" height="2.2" fill="#f0f0f0"/><rect x="207.5" y="154.5" width="2.2" height="2.2" fill="#f0f0f0"/><rect x="139.5" y="192.5" width="2.2" height="2.2" fill="#f0f0f0"/><rect x="207.5" y="192.5" width="2.2" height="2.2" fill="#f0f0f0"/><rect x="139.5" y="194.5" width="2.2" height="2.2" fill="#f0f0f0"/><rect x="207.5" y="194.5" width="2.2" height="2.2" fill="#f0f0f0"/><path d="M209.0 115.5Q243.0 105.5 277.0 115.5Q271.0 155.5 277.0 195.5Q243.0 205.5 209.0 195.5Q215.0 155.5 209.0 115.5Z" fill="none" stroke="#70262e" stroke-width="1"/><rect x="208.0" y="114.5" width="2.2" height="2.2" fill="#f0f0f0"/><rect x="276.0" y="114.5" width="2.2" height="2.2" fill="#f0f0f0"/><rect x="208.0" y="154.5" width="2.2" height="2.2" fill="#f0f0f0"/><rect x="276.0" y="154.5" width="2.2" height="2.2" fill="#f0f0f0"/><rect x="208.0" y="192.5" width="2.2" height="2.2" fill="#f0f0f0"/><rect x="276.0" y="192.5" width="2.2" height="2.2" fill="#f0f0f0"/><rect x="208.0" y="194.5" width="2.2" height="2.2" fill="#f0f0f0"/><rect x="276.0" y="194.5" width="2.2" height="2.2" fill="#f0f0f0"/><path d="M108 140.5H140M154 140.5H180" stroke="#e8e8e8" stroke-width="1"/><rect x="72.0" y="208" width="68" height="64" fill="none" stroke="#70262e" stroke-width="1"/><path d="M78.0 269L134.0 212M86.0 269L136.0 220M76.0 264L128.0 211" stroke="#50181e" stroke-width="1"/><circle cx="94.0" cy="228" r="6" fill="none" stroke="#8a2c3a"/><circle cx="127.0" cy="254" r="6" fill="none" stroke="#8a2c3a"/><path d="M80.0 269L134.0 211L124.0 262L94.0 230L134.0 211" stroke="#b4b4b4" stroke-width=".7" stroke-dasharray="2 1.5" fill="none"/><rect x="79.0" y="268" width="2.2" height="2.2" fill="#f0f0f0"/><rect x="133.0" y="210" width="2.2" height="2.2" fill="#f0f0f0"/><rect x="93.0" y="229" width="2.2" height="2.2" fill="#f0f0f0"/><rect x="123.0" y="261" width="2.2" height="2.2" fill="#f0f0f0"/><rect x="140.5" y="208" width="68" height="64" fill="none" stroke="#70262e" stroke-width="1"/><path d="M146.5 269L202.5 212M154.5 269L204.5 220M144.5 264L196.5 211" stroke="#50181e" stroke-width="1"/><circle cx="162.5" cy="228" r="6" fill="none" stroke="#8a2c3a"/><circle cx="195.5" cy="254" r="6" fill="none" stroke="#8a2c3a"/><path d="M148.5 269L202.5 211L192.5 262L162.5 230L202.5 211" stroke="#b4b4b4" stroke-width=".7" stroke-dasharray="2 1.5" fill="none"/><rect x="147.5" y="268" width="2.2" height="2.2" fill="#f0f0f0"/><rect x="201.5" y="210" width="2.2" height="2.2" fill="#f0f0f0"/><rect x="161.5" y="229" width="2.2" height="2.2" fill="#f0f0f0"/><rect x="191.5" y="261" width="2.2" height="2.2" fill="#f0f0f0"/><rect x="216" y="200" width="78" height="83" fill="none" stroke="#3a1418" stroke-width="1"/><path d="M224.5 208.5H238.5L241.5 211.5V239.5L238.5 242.5H224.5L221.5 239.5V211.5Z" fill="none" stroke="#70262e" stroke-width="1"/><rect x="224.5" y="211.5" width="5" height="7" rx="1.2" fill="none" stroke="#b0e4dc" stroke-width="1.6"/><path d="M225.5 215.0H228.5" stroke="#b0e4dc" stroke-width="1.2"/><rect x="233.0" y="211.5" width="5" height="7" rx="1.2" fill="none" stroke="#b0e4dc" stroke-width="1.6"/><path d="M234.0 215.0H237.0" stroke="#b0e4dc" stroke-width="1.2"/><rect x="229.0" y="222.0" width="5" height="7" rx="1.2" fill="none" stroke="#b0e4dc" stroke-width="1.6"/><path d="M230.0 225.5H233.0" stroke="#b0e4dc" stroke-width="1.2"/><rect x="224.5" y="232.0" width="5" height="7" rx="1.2" fill="none" stroke="#b0e4dc" stroke-width="1.6"/><path d="M225.5 235.5H228.5" stroke="#b0e4dc" stroke-width="1.2"/><rect x="233.0" y="232.0" width="5" height="7" rx="1.2" fill="none" stroke="#b0e4dc" stroke-width="1.6"/><path d="M234.0 235.5H237.0" stroke="#b0e4dc" stroke-width="1.2"/><path d="M224.5 210.5L238.5 238.5M238.5 212.5L226.5 236.5" stroke="#c8c8c8" stroke-width=".6" stroke-dasharray="1.5 1.5"/><rect x="221.5" y="208.5" width="2.2" height="2.2" fill="#f0f0f0"/><rect x="230.5" y="208.0" width="2.2" height="2.2" fill="#f0f0f0"/><rect x="239.5" y="208.5" width="2.2" height="2.2" fill="#f0f0f0"/><rect x="221.5" y="240.5" width="2.2" height="2.2" fill="#f0f0f0"/><rect x="230.5" y="241.0" width="2.2" height="2.2" fill="#f0f0f0"/><rect x="239.5" y="240.5" width="2.2" height="2.2" fill="#f0f0f0"/><path d="M248.3 208.5H262.3L265.3 211.5V239.5L262.3 242.5H248.3L245.3 239.5V211.5Z" fill="none" stroke="#70262e" stroke-width="1"/><rect x="248.3" y="211.5" width="5" height="7" rx="1.2" fill="none" stroke="#b0e4dc" stroke-width="1.6"/><path d="M249.3 215.0H252.3" stroke="#b0e4dc" stroke-width="1.2"/><rect x="256.8" y="211.5" width="5" height="7" rx="1.2" fill="none" stroke="#b0e4dc" stroke-width="1.6"/><path d="M257.8 215.0H260.8" stroke="#b0e4dc" stroke-width="1.2"/><rect x="252.8" y="222.0" width="5" height="7" rx="1.2" fill="none" stroke="#b0e4dc" stroke-width="1.6"/><path d="M253.8 225.5H256.8" stroke="#b0e4dc" stroke-width="1.2"/><rect x="248.3" y="232.0" width="5" height="7" rx="1.2" fill="none" stroke="#b0e4dc" stroke-width="1.6"/><path d="M249.3 235.5H252.3" stroke="#b0e4dc" stroke-width="1.2"/><rect x="256.8" y="232.0" width="5" height="7" rx="1.2" fill="none" stroke="#b0e4dc" stroke-width="1.6"/><path d="M257.8 235.5H260.8" stroke="#b0e4dc" stroke-width="1.2"/><path d="M248.3 210.5L262.3 238.5M262.3 212.5L250.3 236.5" stroke="#c8c8c8" stroke-width=".6" stroke-dasharray="1.5 1.5"/><rect x="245.3" y="208.5" width="2.2" height="2.2" fill="#f0f0f0"/><rect x="254.3" y="208.0" width="2.2" height="2.2" fill="#f0f0f0"/><rect x="263.3" y="208.5" width="2.2" height="2.2" fill="#f0f0f0"/><rect x="245.3" y="240.5" width="2.2" height="2.2" fill="#f0f0f0"/><rect x="254.3" y="241.0" width="2.2" height="2.2" fill="#f0f0f0"/><rect x="263.3" y="240.5" width="2.2" height="2.2" fill="#f0f0f0"/><path d="M272.1 208.5H286.1L289.1 211.5V239.5L286.1 242.5H272.1L269.1 239.5V211.5Z" fill="none" stroke="#70262e" stroke-width="1"/><rect x="272.1" y="211.5" width="5" height="7" rx="1.2" fill="none" stroke="#b0e4dc" stroke-width="1.6"/><path d="M273.1 215.0H276.1" stroke="#b0e4dc" stroke-width="1.2"/><rect x="280.6" y="211.5" width="5" height="7" rx="1.2" fill="none" stroke="#b0e4dc" stroke-width="1.6"/><path d="M281.6 215.0H284.6" stroke="#b0e4dc" stroke-width="1.2"/><rect x="276.6" y="222.0" width="5" height="7" rx="1.2" fill="none" stroke="#b0e4dc" stroke-width="1.6"/><path d="M277.6 225.5H280.6" stroke="#b0e4dc" stroke-width="1.2"/><rect x="272.1" y="232.0" width="5" height="7" rx="1.2" fill="none" stroke="#b0e4dc" stroke-width="1.6"/><path d="M273.1 235.5H276.1" stroke="#b0e4dc" stroke-width="1.2"/><rect x="280.6" y="232.0" width="5" height="7" rx="1.2" fill="none" stroke="#b0e4dc" stroke-width="1.6"/><path d="M281.6 235.5H284.6" stroke="#b0e4dc" stroke-width="1.2"/><path d="M272.1 210.5L286.1 238.5M286.1 212.5L274.1 236.5" stroke="#c8c8c8" stroke-width=".6" stroke-dasharray="1.5 1.5"/><rect x="269.1" y="208.5" width="2.2" height="2.2" fill="#f0f0f0"/><rect x="278.1" y="208.0" width="2.2" height="2.2" fill="#f0f0f0"/><rect x="287.1" y="208.5" width="2.2" height="2.2" fill="#f0f0f0"/><rect x="269.1" y="240.5" width="2.2" height="2.2" fill="#f0f0f0"/><rect x="278.1" y="241.0" width="2.2" height="2.2" fill="#f0f0f0"/><rect x="287.1" y="240.5" width="2.2" height="2.2" fill="#f0f0f0"/><path d="M224.5 244.5H238.5L241.5 247.5V275.5L238.5 278.5H224.5L221.5 275.5V247.5Z" fill="none" stroke="#70262e" stroke-width="1"/><rect x="224.5" y="247.5" width="5" height="7" rx="1.2" fill="none" stroke="#b0e4dc" stroke-width="1.6"/><path d="M225.5 251.0H228.5" stroke="#b0e4dc" stroke-width="1.2"/><rect x="233.0" y="247.5" width="5" height="7" rx="1.2" fill="none" stroke="#b0e4dc" stroke-width="1.6"/><path d="M234.0 251.0H237.0" stroke="#b0e4dc" stroke-width="1.2"/><rect x="229.0" y="258.0" width="5" height="7" rx="1.2" fill="none" stroke="#b0e4dc" stroke-width="1.6"/><path d="M230.0 261.5H233.0" stroke="#b0e4dc" stroke-width="1.2"/><rect x="224.5" y="268.0" width="5" height="7" rx="1.2" fill="none" stroke="#b0e4dc" stroke-width="1.6"/><path d="M225.5 271.5H228.5" stroke="#b0e4dc" stroke-width="1.2"/><rect x="233.0" y="268.0" width="5" height="7" rx="1.2" fill="none" stroke="#b0e4dc" stroke-width="1.6"/><path d="M234.0 271.5H237.0" stroke="#b0e4dc" stroke-width="1.2"/><path d="M224.5 246.5L238.5 274.5M238.5 248.5L226.5 272.5" stroke="#c8c8c8" stroke-width=".6" stroke-dasharray="1.5 1.5"/><rect x="221.5" y="244.5" width="2.2" height="2.2" fill="#f0f0f0"/><rect x="230.5" y="244.0" width="2.2" height="2.2" fill="#f0f0f0"/><rect x="239.5" y="244.5" width="2.2" height="2.2" fill="#f0f0f0"/><rect x="221.5" y="276.5" width="2.2" height="2.2" fill="#f0f0f0"/><rect x="230.5" y="277.0" width="2.2" height="2.2" fill="#f0f0f0"/><rect x="239.5" y="276.5" width="2.2" height="2.2" fill="#f0f0f0"/><path d="M248.3 244.5H262.3L265.3 247.5V275.5L262.3 278.5H248.3L245.3 275.5V247.5Z" fill="none" stroke="#70262e" stroke-width="1"/><rect x="248.3" y="247.5" width="5" height="7" rx="1.2" fill="none" stroke="#b0e4dc" stroke-width="1.6"/><path d="M249.3 251.0H252.3" stroke="#b0e4dc" stroke-width="1.2"/><rect x="256.8" y="247.5" width="5" height="7" rx="1.2" fill="none" stroke="#b0e4dc" stroke-width="1.6"/><path d="M257.8 251.0H260.8" stroke="#b0e4dc" stroke-width="1.2"/><rect x="252.8" y="258.0" width="5" height="7" rx="1.2" fill="none" stroke="#b0e4dc" stroke-width="1.6"/><path d="M253.8 261.5H256.8" stroke="#b0e4dc" stroke-width="1.2"/><rect x="248.3" y="268.0" width="5" height="7" rx="1.2" fill="none" stroke="#b0e4dc" stroke-width="1.6"/><path d="M249.3 271.5H252.3" stroke="#b0e4dc" stroke-width="1.2"/><rect x="256.8" y="268.0" width="5" height="7" rx="1.2" fill="none" stroke="#b0e4dc" stroke-width="1.6"/><path d="M257.8 271.5H260.8" stroke="#b0e4dc" stroke-width="1.2"/><path d="M248.3 246.5L262.3 274.5M262.3 248.5L250.3 272.5" stroke="#c8c8c8" stroke-width=".6" stroke-dasharray="1.5 1.5"/><rect x="245.3" y="244.5" width="2.2" height="2.2" fill="#f0f0f0"/><rect x="254.3" y="244.0" width="2.2" height="2.2" fill="#f0f0f0"/><rect x="263.3" y="244.5" width="2.2" height="2.2" fill="#f0f0f0"/><rect x="245.3" y="276.5" width="2.2" height="2.2" fill="#f0f0f0"/><rect x="254.3" y="277.0" width="2.2" height="2.2" fill="#f0f0f0"/><rect x="263.3" y="276.5" width="2.2" height="2.2" fill="#f0f0f0"/><path d="M272.1 244.5H286.1L289.1 247.5V275.5L286.1 278.5H272.1L269.1 275.5V247.5Z" fill="none" stroke="#70262e" stroke-width="1"/><rect x="272.1" y="247.5" width="5" height="7" rx="1.2" fill="none" stroke="#b0e4dc" stroke-width="1.6"/><path d="M273.1 251.0H276.1" stroke="#b0e4dc" stroke-width="1.2"/><rect x="280.6" y="247.5" width="5" height="7" rx="1.2" fill="none" stroke="#b0e4dc" stroke-width="1.6"/><path d="M281.6 251.0H284.6" stroke="#b0e4dc" stroke-width="1.2"/><rect x="276.6" y="258.0" width="5" height="7" rx="1.2" fill="none" stroke="#b0e4dc" stroke-width="1.6"/><path d="M277.6 261.5H280.6" stroke="#b0e4dc" stroke-width="1.2"/><rect x="272.1" y="268.0" width="5" height="7" rx="1.2" fill="none" stroke="#b0e4dc" stroke-width="1.6"/><path d="M273.1 271.5H276.1" stroke="#b0e4dc" stroke-width="1.2"/><rect x="280.6" y="268.0" width="5" height="7" rx="1.2" fill="none" stroke="#b0e4dc" stroke-width="1.6"/><path d="M281.6 271.5H284.6" stroke="#b0e4dc" stroke-width="1.2"/><path d="M272.1 246.5L286.1 274.5M286.1 248.5L274.1 272.5" stroke="#c8c8c8" stroke-width=".6" stroke-dasharray="1.5 1.5"/><rect x="269.1" y="244.5" width="2.2" height="2.2" fill="#f0f0f0"/><rect x="278.1" y="244.0" width="2.2" height="2.2" fill="#f0f0f0"/><rect x="287.1" y="244.5" width="2.2" height="2.2" fill="#f0f0f0"/><rect x="269.1" y="276.5" width="2.2" height="2.2" fill="#f0f0f0"/><rect x="278.1" y="277.0" width="2.2" height="2.2" fill="#f0f0f0"/><rect x="287.1" y="276.5" width="2.2" height="2.2" fill="#f0f0f0"/><path d="M72 139.5L245 90M138 197L214 141M65 282.5L155 271M155 271L222 258M80 73L150 48M150 73L250 45" stroke="#b4b4b4" stroke-width=".8" stroke-dasharray="3 1.5"/></svg>
<div class="a" style="left:873px;top:341px;width:2px;height:335px;background:#d8d8d8"></div>
<div class="a" style="left:875px;top:342px;width:121px;height:334px;background:#a6d4f4"></div>
<div class="a" style="left:996px;top:342px;width:1.5px;height:334px;background:#f4f8fc"></div>
<div class="a t" style="left:894px;top:346px;font-family:'Liberation Mono';font-size:10.2px;color:#444c6a">Reports</div>
<svg class="a" style="left:877px;top:344px;" width="13" height="12" viewBox="0 0 13 12"><rect x="1" y="1" width="11" height="10" fill="#fff" stroke="#111"/><text x="2.5" y="9" font-size="8" font-weight="bold" font-family="Liberation Sans" fill="#111">R</text><path d="M8 3H11" stroke="#111"/></svg>
<div class="a t" style="left:894px;top:360px;font-family:'Liberation Mono';font-size:10.2px;color:#444c6a">Re-Drawing</div>
<svg class="a" style="left:878px;top:358px;" width="11" height="12" viewBox="0 0 11 12"><rect x="1" y="1" width="9" height="11" fill="#fff" stroke="#555"/><path d="M5 3V9M3 7L5 9L7 7" stroke="#3a8a3a" stroke-width="1.3" fill="none"/></svg>
<div class="a t" style="left:894px;top:374px;font-family:'Liberation Mono';font-size:10.2px;color:#444c6a">Quit NC Display</div>
<div class="a t" style="left:894px;top:387px;font-family:'Liberation Mono';font-size:10.2px;color:#444c6a">Print</div>
<svg class="a" style="left:877px;top:386px;" width="13" height="12" viewBox="0 0 13 12"><path d="M4 1H11L10 4H3Z" fill="#fff" stroke="#222" stroke-width=".8"/><path d="M1 5H13V10H1Z" fill="#333"/><rect x="2" y="6" width="10" height="2" fill="#e8d060"/><rect x="1" y="10" width="12" height="2" fill="#777"/></svg>
<div class="a t" style="left:894px;top:414px;font-family:'Liberation Mono';font-size:10.2px;color:#444c6a">Simulate(Mid. Spe</div>
<svg class="a" style="left:879px;top:414px;" width="9" height="11" viewBox="0 0 9 11"><path d="M1 0L8 5.5L1 11Z" fill="#1a2a6a"/></svg>
<div class="a t" style="left:894px;top:428px;font-family:'Liberation Mono';font-size:10.2px;color:#444c6a">Stop</div>
<svg class="a" style="left:878px;top:428px;" width="12" height="11" viewBox="0 0 12 11"><path d="M1 0L6 5.5L1 11Z" fill="#1a2a6a"/><rect x="7" y="0" width="2" height="11" fill="#1a2a6a"/><rect x="10" y="0" width="2" height="11" fill="#1a2a6a"/></svg>
<div class="a t" style="left:894px;top:442px;font-family:'Liberation Mono';font-size:10.2px;color:#444c6a">Stop Simulation</div>
<div class="a" style="left:879px;top:441px;width:11px;height:11px;background:#d02a2a"></div>
<div class="a t" style="left:894px;top:482px;font-family:'Liberation Mono';font-size:10.2px;color:#444c6a">Re-Read NC data</div>
<div class="a t" style="left:894px;top:536px;font-family:'Liberation Mono';font-size:10.2px;color:#444c6a">USB Transfer</div>
<svg class="a" style="left:878px;top:535px;" width="12" height="12" viewBox="0 0 12 12"><rect x="1" y="1" width="4" height="10" fill="#fff" stroke="#999" stroke-width=".8"/><path d="M3 6H11M8 3L11 6L8 9" stroke="#d01a1a" stroke-width="2" fill="none"/></svg>
<div class="a t" style="left:894px;top:590px;font-family:'Liberation Mono';font-size:10.2px;color:#444c6a">Quit NC Display</div>
<div class="a t" style="left:894px;top:604px;font-family:'Liberation Mono';font-size:10.2px;color:#444c6a">Reports</div>
<svg class="a" style="left:877px;top:603px;" width="13" height="12" viewBox="0 0 13 12"><rect x="1" y="1" width="11" height="10" fill="#fff" stroke="#111"/><text x="2.5" y="9" font-size="8" font-weight="bold" font-family="Liberation Sans" fill="#111">R</text><path d="M8 3H11" stroke="#111"/></svg>
<div class="a" style="left:861px;top:627px;width:12px;height:49px;background:#e8eef4"></div>
<div class="a" style="left:862px;top:656px;width:10px;height:12px;background:#c8c8c8"></div>
<svg class="a" style="left:863px;top:630px;" width="8" height="5" viewBox="0 0 8 5"><path d="M1 4L4 1L7 4" stroke="#555" fill="none"/></svg>
<svg class="a" style="left:863px;top:668px;" width="8" height="5" viewBox="0 0 8 5"><path d="M1 1L4 4L7 1" stroke="#555" fill="none"/></svg>
<div class="a" style="left:535px;top:676px;width:462px;height:15px;background:#f0f0f0;border-top:1px solid #888"></div>
<div class="a" style="left:596px;top:677px;width:1px;height:14px;background:#d8d8d8"></div>
<div class="a" style="left:918px;top:677px;width:1px;height:14px;background:#d8d8d8"></div>
<div class="a t" style="left:538px;top:680px;font-size:8px;color:#333">831.1 -10.0</div>
<div class="a t" style="left:680px;top:680px;font-size:8px;color:#222">Repeat 0mm</div>
</body></html>
